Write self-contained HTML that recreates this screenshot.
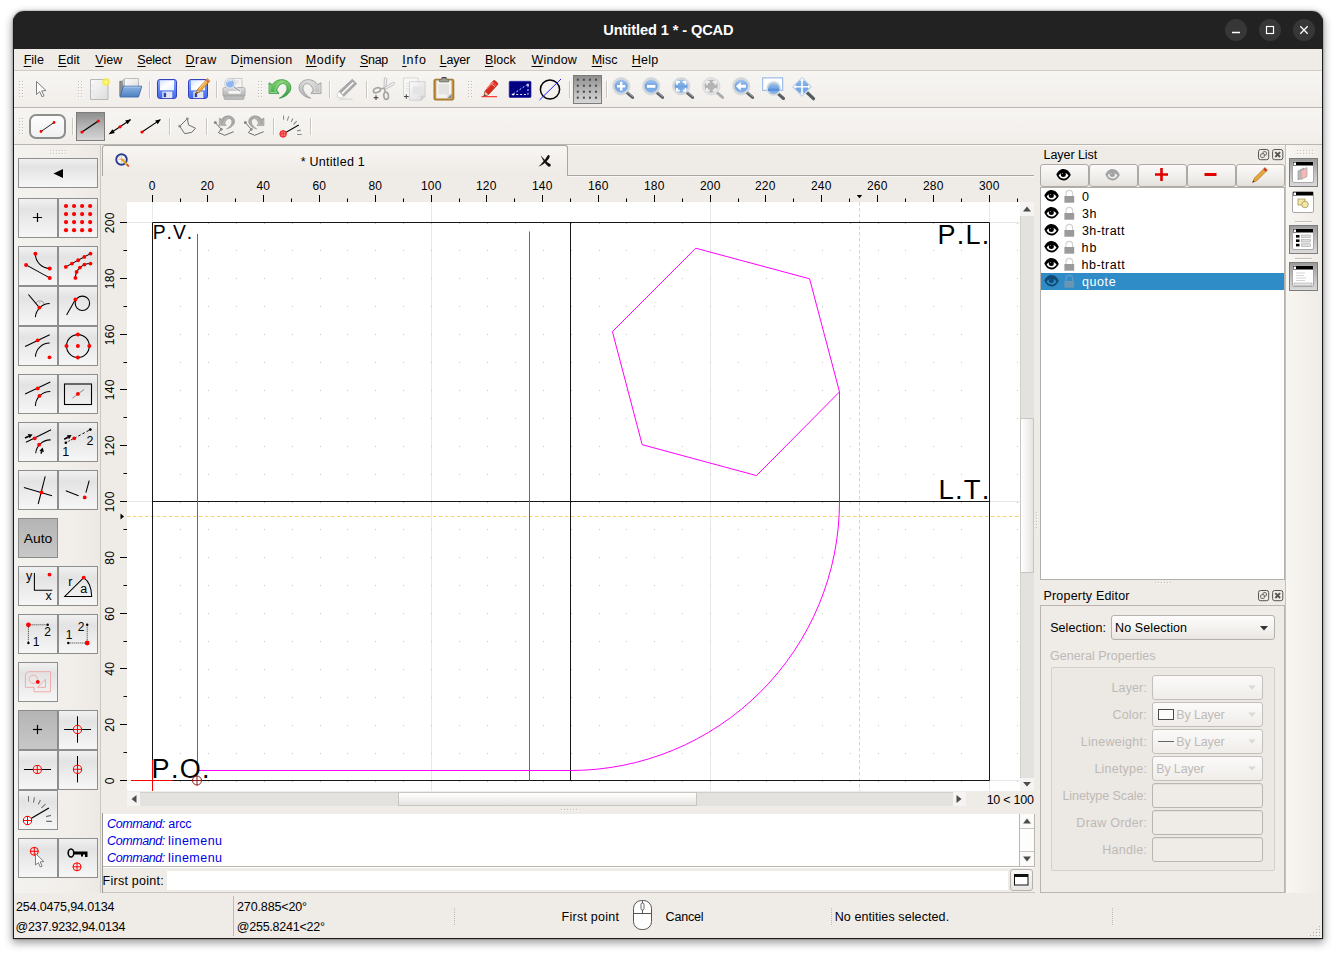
<!DOCTYPE html>
<html lang="en"><head><meta charset="utf-8"><title>Untitled 1 * - QCAD</title>
<style>

*{box-sizing:border-box;margin:0;padding:0}
html,body{width:1336px;height:955px;overflow:hidden;background:#fff}
body{font-kerning:none;position:relative;font-family:"Liberation Sans",sans-serif;font-size:12px;color:#000;line-height:1}
#win{position:absolute;left:13px;top:11px;width:1310px;height:928px;background:#efebe7;border-radius:11px 11px 0 0;
 box-shadow:0 3px 9px 1px rgba(0,0,0,.38), 0 0 2px rgba(0,0,0,.5);overflow:hidden}
#pg{position:absolute;left:-13px;top:-11px;width:1336px;height:955px}
#edge{position:absolute;left:0;top:0;right:0;bottom:0;border:1px solid #1c1c1c;border-top:none;border-radius:0;pointer-events:none;z-index:50}
.a{position:absolute}
svg text{font-kerning:none}
.t{position:absolute;white-space:nowrap;line-height:16px;height:16px}
u{text-decoration:underline;text-underline-offset:2px;text-decoration-thickness:1px}
#title{left:13px;top:11px;width:1310px;height:38px;background:#222222}
#title .tt{left:0;width:1310px;text-align:center;top:10px;color:#fff;font-weight:bold;font-size:14.6px;line-height:18px;height:18px;letter-spacing:.1px}
.wb{position:absolute;width:22px;height:22px;border-radius:11px;background:#373737;top:8px}
#menubar{left:14px;top:49px;width:1308px;height:22px;background:#efebe7;border-bottom:1px solid #cfcbc6}
#menubar .t{top:4px;font-size:12.4px}
.tb{left:14px;width:1308px;height:37px;background:linear-gradient(#f7f5f2,#f1eeea);border-bottom:1px solid #b9b5b0;box-shadow:0 1px 0 #faf9f7}
.vsep{position:absolute;width:2px;height:17px;margin-top:2px;border-left:1px solid #c9c5bf;border-right:1px solid #ffffff}
.ic{position:absolute;width:24px;height:24px}
.ic svg{display:block}
.btn{position:absolute;border:1px solid #8e8e8e;background:linear-gradient(#f1f1f1 0%,#e3e3e3 28%,#ececec 60%,#f6f6f6 100%)}
.btn.on{background:linear-gradient(#b4b4b4,#c8c8c8);border-color:#8a8a8a}
.btn svg{position:absolute;left:0;top:0}
.tbon{position:absolute;border:1px solid #7d7d7d;background:linear-gradient(#8f8f8f 0%,#b9b9b9 55%,#d6d6d6 100%)}
.fld{position:absolute;border:1px solid #b5b1ac;border-radius:3px;background:#efebe7;box-shadow:inset 0 1px 0 #e4e0db}
.combo{position:absolute;border:1px solid #b5b1ac;border-radius:3px;background:linear-gradient(#fdfcfc,#f4f2ef 55%,#e9e6e2)}
.dis{color:#bdbab6}
.lbl{position:absolute;white-space:nowrap;line-height:16px;height:16px;text-align:right}

</style></head>
<body>
<div id="win"><div id="pg">

<div id="title" class="a">
<div class="wb" style="left:1212px"><svg width="22" height="22"><path d="M7 13.500h8" stroke="#fff" stroke-width="1.300" fill="none"/></svg></div>
<div class="wb" style="left:1246px"><svg width="22" height="22"><rect x="7.500" y="7.500" width="7" height="7" stroke="#fff" stroke-width="1.200" fill="none"/></svg></div>
<div class="wb" style="left:1280px"><svg width="22" height="22"><path d="M7.300 7.300l7.400 7.400M14.700 7.300l-7.400 7.400" stroke="#fff" stroke-width="1.300" fill="none"/></svg></div>
</div>
<div id="menubar" class="a"></div><div class="t" style="left:23.67px;top:52.00px;font-size:12.5px;letter-spacing:0.013px;"><u>F</u>ile</div><div class="t" style="left:58.02px;top:52.00px;font-size:12.5px;letter-spacing:0.076px;"><u>E</u>dit</div><div class="t" style="left:95.35px;top:52.00px;font-size:12.5px;letter-spacing:-0.090px;"><u>V</u>iew</div><div class="t" style="left:137.33px;top:52.00px;font-size:12.5px;letter-spacing:-0.196px;"><u>S</u>elect</div><div class="t" style="left:185.57px;top:52.00px;font-size:12.5px;letter-spacing:0.509px;"><u>D</u>raw</div><div class="t" style="left:230.57px;top:52.00px;font-size:12.5px;letter-spacing:0.323px;">D<u>i</u>mension</div><div class="t" style="left:305.67px;top:52.00px;font-size:12.5px;letter-spacing:0.627px;"><u>M</u>odify</div><div class="t" style="left:359.93px;top:52.00px;font-size:12.5px;letter-spacing:-0.267px;"><u>S</u>nap</div><div class="t" style="left:402.15px;top:52.00px;font-size:12.5px;letter-spacing:0.976px;"><u>I</u>nfo</div><div class="t" style="left:439.67px;top:52.00px;font-size:12.5px;letter-spacing:-0.184px;"><u>L</u>ayer</div><div class="t" style="left:484.97px;top:52.00px;font-size:12.5px;letter-spacing:0.060px;"><u>B</u>lock</div><div class="t" style="left:531.55px;top:52.00px;font-size:12.5px;letter-spacing:0.173px;"><u>W</u>indow</div><div class="t" style="left:591.67px;top:52.00px;font-size:12.5px;letter-spacing:0.022px;"><u>M</u>isc</div><div class="t" style="left:631.87px;top:52.00px;font-size:12.5px;letter-spacing:0.181px;"><u>H</u>elp</div><div class="t" style="left:603.32px;top:22.00px;font-size:14.6px;letter-spacing:-0.107px;color:#fff;font-weight:bold;line-height:18px;height:18px;margin-top:-1px;">Untitled 1 * - QCAD</div>
<svg width="0" height="0" style="position:absolute"><defs>
<linearGradient id="gBlue" x1="0" y1="0" x2="0" y2="1"><stop offset="0" stop-color="#bcd6f5"/><stop offset="1" stop-color="#5d97dc"/></linearGradient>
<linearGradient id="gLens" x1="0" y1="0" x2="0" y2="1"><stop offset="0" stop-color="#a9c9f0"/><stop offset=".5" stop-color="#6fa3e3"/><stop offset="1" stop-color="#8db8ec"/></linearGradient>
<linearGradient id="gGray" x1="0" y1="0" x2="0" y2="1"><stop offset="0" stop-color="#dedede"/><stop offset="1" stop-color="#b2b2b2"/></linearGradient>
<linearGradient id="gPaper" x1="0" y1="0" x2="1" y2="1"><stop offset="0" stop-color="#fbfbfb"/><stop offset="1" stop-color="#dcdcdc"/></linearGradient>
<linearGradient id="gFloppy" x1="0" y1="0" x2="0" y2="1"><stop offset="0" stop-color="#86a6ff"/><stop offset="1" stop-color="#4169ee"/></linearGradient>
<linearGradient id="gLabel" x1="0" y1="0" x2="1" y2="1"><stop offset="0" stop-color="#d6e2ff"/><stop offset=".5" stop-color="#ffffff"/><stop offset="1" stop-color="#e4ecff"/></linearGradient>
<linearGradient id="gFolder" x1="0" y1="0" x2="0" y2="1"><stop offset="0" stop-color="#8db5e6"/><stop offset="1" stop-color="#4d7fc0"/></linearGradient>
<radialGradient id="gGlow"><stop offset="0" stop-color="#ffffd0"/><stop offset=".45" stop-color="#f6ee3c"/><stop offset="1" stop-color="#f6ee3c" stop-opacity="0"/></radialGradient>
<linearGradient id="gGreen" x1="0" y1="0" x2="0" y2="1"><stop offset="0" stop-color="#86d672"/><stop offset="1" stop-color="#2f9e40"/></linearGradient>
</defs></svg><div class="a tb" style="top:71px"></div><div class="a tb" style="top:108px"></div><svg class="a" style="left:19px;top:81px" width="7" height="20"><path d="M1 1.50h1M1 4.50h1M1 7.50h1M1 10.50h1M1 13.50h1M1 16.50h1M4 1.50h1M4 4.50h1M4 7.50h1M4 10.50h1M4 13.50h1M4 16.50h1" stroke="#fdfcfb" stroke-width="1"/><path d="M0 0.50h1M0 3.50h1M0 6.50h1M0 9.50h1M0 12.50h1M0 15.50h1M3 0.50h1M3 3.50h1M3 6.50h1M3 9.50h1M3 12.50h1M3 15.50h1" stroke="#c3bfb9" stroke-width="1"/></svg><div class="ic" style="left:29px;top:78px;width:24px;height:24px"><svg width="24" height="24" viewBox="0 0 24 24"><path d="M7.5 3.5v13l3.2-2.8 2.3 5 2-.9-2.3-4.9 4.3-.4z" fill="#fff" stroke="#7d7d7d" stroke-width="1" stroke-linejoin="round"/></svg></div><svg class="a" style="left:78px;top:81px" width="7" height="20"><path d="M1 1.50h1M1 4.50h1M1 7.50h1M1 10.50h1M1 13.50h1M1 16.50h1M4 1.50h1M4 4.50h1M4 7.50h1M4 10.50h1M4 13.50h1M4 16.50h1" stroke="#fdfcfb" stroke-width="1"/><path d="M0 0.50h1M0 3.50h1M0 6.50h1M0 9.50h1M0 12.50h1M0 15.50h1M3 0.50h1M3 3.50h1M3 6.50h1M3 9.50h1M3 12.50h1M3 15.50h1" stroke="#c3bfb9" stroke-width="1"/></svg><div class="ic" style="left:88px;top:77px;width:24px;height:24px"><svg width="24" height="24" viewBox="0 0 24 24"><path d="M2.5 2.5h17.5v20h-17.5z" fill="url(#gPaper)" stroke="#b8b8b8" stroke-width="1"/><path d="M4.5 8.5h.8M4.5 14.5h.8" stroke="#c8c8c8"/><circle cx="18" cy="5" r="5" fill="url(#gGlow)"/></svg></div><div class="ic" style="left:118px;top:77px;width:24px;height:24px"><svg width="24" height="24" viewBox="0 0 24 24"><path d="M1.800 4.300h5.500l1 1.500h12.200v13.500h-18.700z" fill="#8c8f94" stroke="#70737a" stroke-width=".8" stroke-linejoin="round"/><path d="M4.500 3l12.500-1.800 1.800 12.500h-13z" fill="#d6d6d6" stroke="#a4a4a4" stroke-width=".7"/><path d="M6.500 1.500h14v13h-14z" fill="url(#gPaper)" stroke="#aeaeae" stroke-width=".7"/><path d="M5.300 9.200h18.500l-3.300 10.800h-18.300z" fill="url(#gFolder)" stroke="#3f6ba8" stroke-width=".9" stroke-linejoin="round"/><path d="M6 10.100h16.700" stroke="#a9c8ee" stroke-width=".9"/></svg></div><div class="ic" style="left:155px;top:77px;width:24px;height:24px"><svg width="24" height="24" viewBox="0 0 24 24"><rect x="2.500" y="2.500" width="19" height="19" rx="2.400" fill="url(#gFloppy)" stroke="#3344bb" stroke-width="1"/><rect x="5" y="3.300" width="14" height="10" fill="url(#gLabel)"/><rect x="7.300" y="14.600" width="10" height="6.500" fill="#e4e6ee"/><rect x="8.700" y="15.800" width="2.400" height="4.300" fill="#2b3fb5"/></svg></div><div class="ic" style="left:186px;top:77px;width:24px;height:24px"><svg width="24" height="24" viewBox="0 0 24 24"><rect x="2.500" y="2.500" width="19" height="19" rx="2.400" fill="url(#gFloppy)" stroke="#3344bb" stroke-width="1"/><rect x="5" y="3.300" width="14" height="10" fill="url(#gLabel)"/><rect x="7.300" y="14.600" width="10" height="6.500" fill="#e4e6ee"/><rect x="8.700" y="15.800" width="2.400" height="4.300" fill="#2b3fb5"/><path d="M21.500 1.500l2.300 2.600-9.800 10.700-3.600 1.600 1-3.800z" fill="#f3a93a" stroke="#b9731a" stroke-width=".7" stroke-linejoin="round"/><path d="M20.200 2.900l2.400 2.500" stroke="#e05a4a" stroke-width="1.700"/><path d="M13.500 11.500l7.300-8" stroke="#ffd690" stroke-width="1"/><path d="M10.400 16.400l1-3.800 2.600 2.200z" fill="#ecd6b0" stroke="#7a5a2a" stroke-width=".5"/><path d="M10.400 16.400l.5-1.700 1.100 1z" fill="#333"/></svg></div><div class="ic" style="left:222px;top:77px;width:24px;height:24px"><svg width="24" height="24" viewBox="0 0 24 24"><path d="M9 1.500h11v9h-11z" fill="#f4f4f4" stroke="#c2c2c2" stroke-width=".8"/><path d="M11 4h6M11 6h6" stroke="#d6d6d6" stroke-width=".8"/><path d="M2.500 10.500h19c1 0 1.500 .6 1.500 1.500v7h-22v-7c0-.9 .5-1.500 1.500-1.500z" fill="url(#gGray)" stroke="#a6a6a6" stroke-width=".8"/><path d="M2 19h20v2.500c0 .6-.4 1-1 1h-18c-.6 0-1-.4-1-1z" fill="#bcbcbc" stroke="#a0a0a0" stroke-width=".6"/><rect x="6" y="13.500" width="13" height="3.600" rx="1" fill="#f6f6f6" stroke="#b8b8b8" stroke-width=".6"/><path d="M11.500 9.800l6 3.800" stroke="#f0f0f0" stroke-width="2.800" stroke-linecap="round"/><path d="M11.500 9.800l6 3.800" stroke="#a8adb3" stroke-width="1.400" stroke-linecap="round"/><circle cx="8" cy="6.600" r="4.700" fill="#8fb6ea" stroke="#e4e9ef" stroke-width="1.500"/><circle cx="8" cy="6.600" r="5.500" fill="none" stroke="#b5bcc4" stroke-width=".5"/><path d="M5 5.500a3.500 3.500 0 0 1 5-1.500" stroke="#d6e6fa" stroke-width="1.200" fill="none"/></svg></div><div class="vsep" style="left:149px;top:79px"></div><div class="vsep" style="left:216px;top:79px"></div><svg class="a" style="left:258px;top:81px" width="7" height="20"><path d="M1 1.50h1M1 4.50h1M1 7.50h1M1 10.50h1M1 13.50h1M1 16.50h1M4 1.50h1M4 4.50h1M4 7.50h1M4 10.50h1M4 13.50h1M4 16.50h1" stroke="#fdfcfb" stroke-width="1"/><path d="M0 0.50h1M0 3.50h1M0 6.50h1M0 9.50h1M0 12.50h1M0 15.50h1M3 0.50h1M3 3.50h1M3 6.50h1M3 9.50h1M3 12.50h1M3 15.50h1" stroke="#c3bfb9" stroke-width="1"/></svg><div class="ic" style="left:268px;top:77px;width:24px;height:24px"><svg width="24" height="24" viewBox="0 0 24 24"><path d="M1 5.800L1 16.500L11 16.600L8.700 13.100C10 9 13 6.200 15.500 6.600C18.500 7.200 19.600 10.500 18.600 13.500C17.600 16.500 14.500 19.500 11.300 21.200C17 20.600 22.500 16 22.900 11.200C23.200 6 18.500 2.600 13.600 2.600C9.500 2.600 6.500 4.800 4.200 7.500Z" fill="url(#gGreen)" stroke="#2d8f3c" stroke-width=".7" stroke-linejoin="round"/><path d="M2 8.300V15.600H8.800L6.900 13.300C8.500 8.500 11.500 5 15 4.600" fill="none" stroke="#b6ecaa" stroke-width="1" opacity=".7"/></svg></div><div class="ic" style="left:298px;top:77px;width:24px;height:24px"><svg width="24" height="24" viewBox="0 0 24 24"><g transform="translate(24,0) scale(-1,1)"><path d="M1 5.800L1 16.500L11 16.600L8.700 13.100C10 9 13 6.200 15.500 6.600C18.500 7.200 19.600 10.500 18.600 13.500C17.600 16.500 14.500 19.500 11.300 21.200C17 20.600 22.500 16 22.900 11.200C23.200 6 18.500 2.600 13.600 2.600C9.500 2.600 6.500 4.800 4.200 7.500Z" fill="url(#gGray)" stroke="#8f8f8f" stroke-width=".7" stroke-linejoin="round"/><path d="M2 8.300V15.600H8.800L6.900 13.300C8.500 8.500 11.500 5 15 4.600" fill="none" stroke="#e6e6e6" stroke-width="1" opacity=".7"/></g></svg></div><div class="ic" style="left:335px;top:77px;width:24px;height:24px"><svg width="24" height="24" viewBox="0 0 24 24"><path d="M4.500 22.300h13" stroke="#dcdcdc" stroke-width="1.400"/><path d="M17.300 2.200l4.500 4.500-13.100 12.800-4.850-4.900z" fill="#a9a9a9" stroke="#9a9a9a" stroke-width=".6" stroke-linejoin="round"/><path d="M18.300 5.600L7 16.700" stroke="#fff" stroke-width="1.700"/><path d="M20.300 4.600L9 15.700" stroke="#c9c9c9" stroke-width=".9"/><path d="M3.850 14.600l4.850 4.900-2.600 1.500-3.400-.6-.3-3.400z" fill="#fff" stroke="#c4c4c4" stroke-width=".7" stroke-linejoin="round"/></svg></div><div class="ic" style="left:372px;top:77px;width:24px;height:24px"><svg width="24" height="24" viewBox="0 0 24 24"><path d="M13.200 .6c1.300 0 1.600 1 1.500 2.500l-1 8.500-1.700-.6 .3-8c0-1.400 .2-2.400 .9-2.400z" fill="#f4f4f4" stroke="#b3b3b3" stroke-width=".8" stroke-linejoin="round"/><path d="M22.300 5.600c.5 .9 .2 1.600-.8 2.200l-8.300 4.700-1-1.600 8-5c.9-.6 1.700-.9 2.100-.3z" fill="#f4f4f4" stroke="#b3b3b3" stroke-width=".8" stroke-linejoin="round"/><ellipse cx="5" cy="13.200" rx="3.700" ry="2.300" transform="rotate(-22 5 13.200)" fill="none" stroke="#a6a6a6" stroke-width="1.700"/><ellipse cx="14.100" cy="18.800" rx="2.300" ry="3.600" transform="rotate(-8 14.100 18.800)" fill="none" stroke="#a6a6a6" stroke-width="1.700"/><path d="M8.300 11.800l4.200-.6M13 15.300l-.5-4" stroke="#a6a6a6" stroke-width="1.500"/><path d="M1.700 20.600h4.600M4 18.300v4.600" stroke="#4a4a4a" stroke-width="1.100"/></svg></div><div class="ic" style="left:402px;top:77px;width:24px;height:24px"><svg width="24" height="24" viewBox="0 0 24 24"><path d="M1.500 1h14.600v18.500h-14.600z" fill="#f7f7f7" stroke="#d4d4d4" stroke-width=".9"/><path d="M3.500 6.500h4M3.500 9h4M3.500 11.500h4M3.500 14h4" stroke="#e0e0e0" stroke-width=".8"/><path d="M7.500 4.700h15.600v14.500l-4 4h-11.600z" fill="url(#gPaper)" stroke="#cfcfcf" stroke-width=".9" stroke-linejoin="round"/><path d="M10.600 9.400h10.500v7.800h-10.500z" fill="#e4e4e4"/><path d="M23.100 19.200l-4 4v-4z" fill="#d8d8d8" stroke="#c4c4c4" stroke-width=".6"/><path d="M2 19.500h4.600M4.300 17.200v4.600" stroke="#4a4a4a" stroke-width="1.100"/></svg></div><div class="ic" style="left:432px;top:77px;width:24px;height:24px"><svg width="24" height="24" viewBox="0 0 24 24"><rect x="2" y="2.200" width="19.800" height="20.800" rx="1.500" fill="#c18a30" stroke="#9a6a1e" stroke-width=".9"/><path d="M4.200 3.700h15.400v17.600h-15.400z" fill="#f3f3f1" stroke="#d0cdc4" stroke-width=".6"/><path d="M6.500 7h10.500v10.500h-10.500z" fill="#e3e3e1"/><path d="M19.600 16.800l-4.500 4.500h4.500z" fill="#8a8a8a"/><path d="M19.600 16.800l-4.500 4.500 .5-4z" fill="#d9d9d9"/><path d="M7.600 4.900h9v-2.400h-1.800l-.6-2.300h-4.200l-.6 2.300h-1.800z" fill="#9a9b90" stroke="#6f7068" stroke-width=".8" stroke-linejoin="round"/><path d="M10 .7h4" stroke="#333" stroke-width="1"/></svg></div><div class="vsep" style="left:329px;top:79px"></div><div class="vsep" style="left:366px;top:79px"></div><svg class="a" style="left:468px;top:81px" width="7" height="20"><path d="M1 1.50h1M1 4.50h1M1 7.50h1M1 10.50h1M1 13.50h1M1 16.50h1M4 1.50h1M4 4.50h1M4 7.50h1M4 10.50h1M4 13.50h1M4 16.50h1" stroke="#fdfcfb" stroke-width="1"/><path d="M0 0.50h1M0 3.50h1M0 6.50h1M0 9.50h1M0 12.50h1M0 15.50h1M3 0.50h1M3 3.50h1M3 6.50h1M3 9.50h1M3 12.50h1M3 15.50h1" stroke="#c3bfb9" stroke-width="1"/></svg><div class="ic" style="left:478px;top:77px;width:24px;height:24px"><svg width="24" height="24" viewBox="0 0 24 24"><path d="M3.500 19.600h15.500" stroke="#ff3b3b" stroke-width="1.100"/><path d="M14.800 4.300c.8-.9 1.700-.9 2.600-.2l1.700 1.500c.8.700.9 1.600.2 2.400l-8.800 9.500-4.500 1.700 1-4.800z" fill="#dd2a1c" stroke="#a3170e" stroke-width=".7" stroke-linejoin="round"/><path d="M13.300 6.600l3.800 3.300" stroke="#f6b2aa" stroke-width="1"/><path d="M14.300 5l4 3.500" stroke="#f08a80" stroke-width=".8"/><path d="M9 11.500l6-6.500" stroke="#ff7a6a" stroke-width="1.200"/><path d="M6 19.200l1-4.800 3.500 3.100z" fill="#efd2ac" stroke="#8a5a3a" stroke-width=".5"/><path d="M6 19.200l.45-2 1.400 1.300z" fill="#333"/></svg></div><div class="ic" style="left:508px;top:77px;width:24px;height:24px"><svg width="24" height="24" viewBox="0 0 24 24"><rect x="1.200" y="4.300" width="21.800" height="16.200" rx="1" fill="#000082" stroke="#2a2aa8" stroke-width=".7"/><path d="M4.500 17.500h15.500v-10.500z" fill="none" stroke="#e4e4ff" stroke-width="1" stroke-dasharray="2 1.800"/><path d="M3.300 17.500l2.200-1.300v2.600zM20 6.300l-1.300 2.200h2.600z" fill="#fff"/></svg></div><div class="ic" style="left:538px;top:77px;width:24px;height:24px"><svg width="24" height="24" viewBox="0 0 24 24"><circle cx="12" cy="12.500" r="9.600" fill="none" stroke="#000" stroke-width="1.500"/><path d="M1.500 23L23 2" stroke="#2020ff" stroke-width="1"/></svg></div><div class="vsep" style="left:569px;top:79px"></div><div class="tbon" style="left:573px;top:75px;width:29px;height:29px"><svg style="position:absolute;left:1px;top:1px" width="27" height="27" viewBox="0 0 27 27"><rect x="1.80" y="1.70" width="2" height="2" fill="#484848"/><rect x="1.80" y="7.70" width="2" height="2" fill="#484848"/><rect x="1.80" y="13.70" width="2" height="2" fill="#484848"/><rect x="1.80" y="19.70" width="2" height="2" fill="#484848"/><rect x="7.88" y="1.70" width="2" height="2" fill="#484848"/><rect x="7.88" y="7.70" width="2" height="2" fill="#484848"/><rect x="7.88" y="13.70" width="2" height="2" fill="#484848"/><rect x="7.88" y="19.70" width="2" height="2" fill="#484848"/><rect x="13.96" y="1.70" width="2" height="2" fill="#484848"/><rect x="13.96" y="7.70" width="2" height="2" fill="#484848"/><rect x="13.96" y="13.70" width="2" height="2" fill="#484848"/><rect x="13.96" y="19.70" width="2" height="2" fill="#484848"/><rect x="20.04" y="1.70" width="2" height="2" fill="#484848"/><rect x="20.04" y="7.70" width="2" height="2" fill="#484848"/><rect x="20.04" y="13.70" width="2" height="2" fill="#484848"/><rect x="20.04" y="19.70" width="2" height="2" fill="#484848"/></svg></div><div class="vsep" style="left:606px;top:79px"></div><div class="ic" style="left:611px;top:77px;width:24px;height:24px"><svg width="24" height="24" viewBox="0 0 24 24"><path d="M16 15.600l5.600 4.800" stroke="#5a5f63" stroke-width="3" stroke-linecap="round"/><path d="M16.600 15.300l5.300 4.500" stroke="#a4aaae" stroke-width=".9" stroke-linecap="round"/><circle cx="10.200" cy="9.200" r="7.500" fill="url(#gLens)" stroke="#d3d8dd" stroke-width="1.900"/><circle cx="10.200" cy="9.200" r="8.700" fill="none" stroke="#c3c8cd" stroke-width=".5"/><g transform="translate(.5,-.3)"><path d="M5.500 9.500h8.400M9.700 5.300v8.400" stroke="#fff" stroke-width="2.400"/></g></svg></div><div class="ic" style="left:641px;top:77px;width:24px;height:24px"><svg width="24" height="24" viewBox="0 0 24 24"><path d="M16 15.600l5.600 4.800" stroke="#5a5f63" stroke-width="3" stroke-linecap="round"/><path d="M16.600 15.300l5.300 4.500" stroke="#a4aaae" stroke-width=".9" stroke-linecap="round"/><circle cx="10.200" cy="9.200" r="7.500" fill="url(#gLens)" stroke="#d3d8dd" stroke-width="1.900"/><circle cx="10.200" cy="9.200" r="8.700" fill="none" stroke="#c3c8cd" stroke-width=".5"/><g transform="translate(.5,-.3)"><path d="M5.500 9.700h8.400" stroke="#fff" stroke-width="2.600"/></g></svg></div><div class="ic" style="left:671px;top:77px;width:24px;height:24px"><svg width="24" height="24" viewBox="0 0 24 24"><path d="M16 15.600l5.600 4.800" stroke="#5a5f63" stroke-width="3" stroke-linecap="round"/><path d="M16.600 15.300l5.300 4.500" stroke="#a4aaae" stroke-width=".9" stroke-linecap="round"/><circle cx="10.200" cy="9.200" r="7.500" fill="url(#gLens)" stroke="#d3d8dd" stroke-width="1.900"/><circle cx="10.200" cy="9.200" r="8.700" fill="none" stroke="#c3c8cd" stroke-width=".5"/><g transform="translate(.5,-.3)"><path d="M5.500 8v-2.700h2.800M11.200 5.300h2.800v2.700M14 11.200v2.700h-2.800M8.300 13.900h-2.800v-2.700" stroke="#fff" stroke-width="1.800" fill="none"/></g></svg></div><div class="ic" style="left:701px;top:77px;width:24px;height:24px"><svg width="24" height="24" viewBox="0 0 24 24"><path d="M16 15.600l5.600 4.800" stroke="#b0b0b0" stroke-width="3" stroke-linecap="round"/><path d="M16.600 15.300l5.300 4.500" stroke="#a4aaae" stroke-width=".9" stroke-linecap="round"/><circle cx="10.200" cy="9.200" r="7.500" fill="#b4b4b4" stroke="#e4e4e4" stroke-width="1.900"/><circle cx="10.200" cy="9.200" r="8.700" fill="none" stroke="#c3c8cd" stroke-width=".5"/><g transform="translate(.5,-.3)"><path d="M5.500 8v-2.700h2.800M11.200 5.300h2.800v2.700M14 11.200v2.700h-2.800M8.300 13.900h-2.800v-2.700" stroke="#efefef" stroke-width="2" fill="none"/></g></svg></div><div class="ic" style="left:731px;top:77px;width:24px;height:24px"><svg width="24" height="24" viewBox="0 0 24 24"><path d="M16 15.600l5.600 4.800" stroke="#5a5f63" stroke-width="3" stroke-linecap="round"/><path d="M16.600 15.300l5.300 4.500" stroke="#a4aaae" stroke-width=".9" stroke-linecap="round"/><circle cx="10.200" cy="9.200" r="7.500" fill="url(#gLens)" stroke="#d3d8dd" stroke-width="1.900"/><circle cx="10.200" cy="9.200" r="8.700" fill="none" stroke="#c3c8cd" stroke-width=".5"/><g transform="translate(.5,-.3)"><path d="M4.300 9.600l5-4.200v2.700h5.200v3h-5.200v2.700z" fill="#fff"/></g></svg></div><div class="ic" style="left:761px;top:77px;width:24px;height:24px"><svg width="24" height="24" viewBox="0 0 24 24"><rect x="1.700" y=".9" width="20" height="12.400" fill="#fff" stroke="#8ab0e8" stroke-width="1"/><path d="M17.500 17.200l5 4.300" stroke="#5a5f63" stroke-width="3" stroke-linecap="round"/><circle cx="12.700" cy="11.500" r="6.400" fill="url(#gLens)" stroke="#d3d8dd" stroke-width="1.800"/><path d="M7 12.800h11.400" stroke="#5b90d8" stroke-width="2.200"/></svg></div><div class="ic" style="left:792px;top:77px;width:24px;height:24px"><svg width="24" height="24" viewBox="0 0 24 24"><path d="M15 15.500l6.500 6.200" stroke="#555a5f" stroke-width="3.200" stroke-linecap="round"/><path d="M10 0l9.800 9.800-9.800 9.800-9.800-9.800z" fill="url(#gLens)" stroke="#dfe3e8" stroke-width="1.200"/><path d="M10 2.500v14.600M2.700 9.800h14.600" stroke="#fff" stroke-width="1.600"/><path d="M10 1l2 2.800h-4zM10 18.600l2-2.800h-4zM1.200 9.800l2.800-2v4zM18.800 9.800l-2.800-2v4z" fill="#fff"/></svg></div><svg class="a" style="left:19px;top:118px" width="7" height="20"><path d="M1 1.50h1M1 4.50h1M1 7.50h1M1 10.50h1M1 13.50h1M1 16.50h1M4 1.50h1M4 4.50h1M4 7.50h1M4 10.50h1M4 13.50h1M4 16.50h1" stroke="#fdfcfb" stroke-width="1"/><path d="M0 0.50h1M0 3.50h1M0 6.50h1M0 9.50h1M0 12.50h1M0 15.50h1M3 0.50h1M3 3.50h1M3 6.50h1M3 9.50h1M3 12.50h1M3 15.50h1" stroke="#c3bfb9" stroke-width="1"/></svg><div class="a" style="left:29px;top:114px;width:37px;height:25px;border:2px solid #8e8e8e;border-radius:7px;background:linear-gradient(#fdfdfd,#f0f0f0)"></div><div class="ic" style="left:29px;top:114px;width:37px;height:24px"><svg width="37" height="24" viewBox="0 0 37 24"><path d="M12 17.500L25 8.500" stroke="#222" stroke-width="1"/><circle cx="12" cy="17.5" r="1.4" fill="#ff0000"/><circle cx="25" cy="8.5" r="1.4" fill="#ff0000"/></svg></div><div class="vsep" style="left:72px;top:116px"></div><div class="tbon" style="left:76px;top:112px;width:29px;height:29px"></div><div class="ic" style="left:76px;top:112px;width:29px;height:29px"><svg width="29" height="29" viewBox="0 0 29 29"><path d="M6 20L22.300 9" stroke="#000" stroke-width="1.2"/><circle cx="6" cy="20" r="1.6" fill="#ff0000"/><circle cx="22.3" cy="9" r="1.6" fill="#ff0000"/></svg></div><div class="ic" style="left:108px;top:114px;width:24px;height:24px"><svg width="24" height="24" viewBox="0 0 24 24"><path d="M1.500 19.800L22.500 5.700" stroke="#000" stroke-width="1.1"/><path d="M1 20.200l5.800-1.300-2.400-3.600zM23 5.300l-5.800 1.300 2.400 3.600z" fill="#000"/><circle cx="12" cy="12.8" r="1.6" fill="#ff0000"/></svg></div><div class="ic" style="left:138px;top:114px;width:24px;height:24px"><svg width="24" height="24" viewBox="0 0 24 24"><path d="M4 18L22 5.900" stroke="#000" stroke-width="1.100"/><path d="M23 5.300l-5.800 1.300 2.400 3.600z" fill="#000"/><circle cx="4" cy="18" r="1.6" fill="#ff0000"/></svg></div><div class="vsep" style="left:169px;top:116px"></div><div class="ic" style="left:175px;top:114px;width:24px;height:24px"><svg width="24" height="24" viewBox="0 0 24 24"><path d="M12.400 4.700L13.500 10.900L20.500 14.200L16.800 18.300L9.800 19.700L4.700 12.300Z" fill="none" stroke="#6e6e6e" stroke-width="1" stroke-linejoin="round"/><circle cx="12.300" cy="4.800" r="1.400" fill="#8a8a8a"/><circle cx="4.800" cy="12.200" r="1.400" fill="#8a8a8a"/></svg></div><div class="vsep" style="left:206px;top:116px"></div><div class="ic" style="left:212px;top:114px;width:24px;height:24px"><svg width="24" height="24" viewBox="0 0 24 24"><path d="M3.300 8.600L9.300 15.300L6.400 18.600L12.700 21.300L21.700 17.700" fill="none" stroke="#6e6e6e" stroke-width="1" stroke-linejoin="round"/><circle cx="3.300" cy="8.600" r="1.500" fill="#8a8a8a"/><circle cx="9.300" cy="15.300" r="1.400" fill="#8a8a8a"/><g transform="translate(6.600,0) scale(.7)"><path d="M1 5.800L1 16.500L11 16.600L8.700 13.100C10 9 13 6.200 15.500 6.600C18.500 7.200 19.600 10.500 18.600 13.500C17.600 16.500 14.500 19.500 11.300 21.200C17 20.600 22.500 16 22.900 11.200C23.200 6 18.500 2.600 13.600 2.600C9.500 2.600 6.500 4.800 4.200 7.500Z" fill="#a8a8a8" stroke="#8c8c8c" stroke-width=".7" stroke-linejoin="round"/><path d="M2 8.300V15.600H8.800L6.900 13.300C8.500 8.500 11.500 5 15 4.600" fill="none" stroke="#cfcfcf" stroke-width="1" opacity=".7"/></g></svg></div><div class="ic" style="left:242px;top:114px;width:24px;height:24px"><svg width="24" height="24" viewBox="0 0 24 24"><path d="M3.300 8.600L9.300 15.300L6.400 18.600L12.700 21.300L21.700 17.700" fill="none" stroke="#6e6e6e" stroke-width="1" stroke-linejoin="round"/><circle cx="3.300" cy="8.600" r="1.500" fill="#8a8a8a"/><circle cx="9.300" cy="15.300" r="1.400" fill="#8a8a8a"/><g transform="translate(22.700,0) scale(-.7,.7)"><path d="M1 5.800L1 16.500L11 16.600L8.700 13.100C10 9 13 6.200 15.500 6.600C18.500 7.200 19.600 10.500 18.600 13.500C17.600 16.500 14.500 19.500 11.300 21.200C17 20.600 22.500 16 22.900 11.200C23.200 6 18.500 2.600 13.600 2.600C9.500 2.600 6.500 4.800 4.200 7.500Z" fill="#a8a8a8" stroke="#8c8c8c" stroke-width=".7" stroke-linejoin="round"/><path d="M2 8.300V15.600H8.800L6.900 13.300C8.500 8.500 11.500 5 15 4.600" fill="none" stroke="#cfcfcf" stroke-width="1" opacity=".7"/></g></svg></div><div class="vsep" style="left:273px;top:116px"></div><div class="ic" style="left:279px;top:114px;width:24px;height:24px"><svg width="24" height="24" viewBox="0 0 24 24"><path d="M4.500 1.400L4.600 5.700M9.700 2.400L8.300 6.700M13.900 4.500L12.100 7.900M17.700 7.100L14.500 10.500M18 16.900L21.800 16.100M18 20.500H22.800" stroke="#fbfbfa" stroke-width="1" fill="none" transform="translate(-.8,.3)"/><path d="M4.500 1.400L4.600 5.700M9.700 2.400L8.300 6.700M13.900 4.500L12.100 7.900M17.700 7.100L14.500 10.500M18 16.900L21.800 16.100M18 20.500H22.800" stroke="#8a8a8a" stroke-width="1.100" fill="none"/><path d="M4.900 19.500L19.800 10.900" stroke="#111" stroke-width="1.200"/><circle cx="4.100" cy="19.900" r="3.300" fill="#ff5a5a" stroke="#ee1c1c" stroke-width=".9"/><path d="M1.300 19.900h5.600M4.100 17.100v5.600" stroke="#e81818" stroke-width=".9"/><path d="M2.600 18.400h.9v.9h-.9zM4.700 18.400h.9v.9h-.9zM2.600 20.500h.9v.9h-.9zM4.700 20.500h.9v.9h-.9z" fill="#ffd6d6"/></svg></div><div class="vsep" style="left:310px;top:116px"></div><div class="a" style="left:14px;top:145px;width:87px;height:748px;background:linear-gradient(90deg,#f4f2ef,#f1eeea 70%,#ece8e3);border-right:1px solid #c9c5bf"></div><svg class="a" style="left:50px;top:150px" width="19" height="8"><path d="M1 1.50h1M1 4.50h1M4 1.50h1M4 4.50h1M7 1.50h1M7 4.50h1M10 1.50h1M10 4.50h1M13 1.50h1M13 4.50h1M16 1.50h1M16 4.50h1" stroke="#fdfcfb" stroke-width="1"/><path d="M0 0.50h1M0 3.50h1M3 0.50h1M3 3.50h1M6 0.50h1M6 3.50h1M9 0.50h1M9 3.50h1M12 0.50h1M12 3.50h1M15 0.50h1M15 3.50h1" stroke="#c3bfb9" stroke-width="1"/></svg><div class="btn" style="left:18px;top:158px;width:80px;height:30px"><svg width="78" height="28" viewBox="1 1 78 28"><path d="M35.500 15.500l9.500-4.500v9z" fill="#000"/></svg></div><div class="btn" style="left:18px;top:198px;width:40px;height:40px"><svg width="38" height="38" viewBox="1 1 38 38"><path d="M14.9 19.5L24.1 19.5" stroke="#000" stroke-width="1.2" fill="none" /><path d="M19.5 14.9L19.5 24.1" stroke="#000" stroke-width="1.2" fill="none" /></svg></div><div class="btn" style="left:58px;top:198px;width:40px;height:40px"><svg width="38" height="38" viewBox="1 1 38 38"><circle cx="8.0" cy="8.0" r="2.1" fill="#ff0000"/><circle cx="8.0" cy="16.05" r="2.1" fill="#ff0000"/><circle cx="8.0" cy="24.1" r="2.1" fill="#ff0000"/><circle cx="8.0" cy="32.150000000000006" r="2.1" fill="#ff0000"/><circle cx="16.05" cy="8.0" r="2.1" fill="#ff0000"/><circle cx="16.05" cy="16.05" r="2.1" fill="#ff0000"/><circle cx="16.05" cy="24.1" r="2.1" fill="#ff0000"/><circle cx="16.05" cy="32.150000000000006" r="2.1" fill="#ff0000"/><circle cx="24.1" cy="8.0" r="2.1" fill="#ff0000"/><circle cx="24.1" cy="16.05" r="2.1" fill="#ff0000"/><circle cx="24.1" cy="24.1" r="2.1" fill="#ff0000"/><circle cx="24.1" cy="32.150000000000006" r="2.1" fill="#ff0000"/><circle cx="32.150000000000006" cy="8.0" r="2.1" fill="#ff0000"/><circle cx="32.150000000000006" cy="16.05" r="2.1" fill="#ff0000"/><circle cx="32.150000000000006" cy="24.1" r="2.1" fill="#ff0000"/><circle cx="32.150000000000006" cy="32.150000000000006" r="2.1" fill="#ff0000"/></svg></div><div class="btn" style="left:18px;top:246px;width:40px;height:40px"><svg width="38" height="38" viewBox="1 1 38 38"><path d="M8.1 18.9L31.7 31.9" stroke="#000" stroke-width="1.05" fill="none" /><path d="M17.400 7.800A14.300 14.600 0 0 0 31.700 22.400" stroke="#000" stroke-width="1.05" fill="none" /><circle cx="8.1" cy="18.9" r="2.0" fill="#ff0000"/><circle cx="31.7" cy="31.9" r="2.0" fill="#ff0000"/><circle cx="17.4" cy="7.8" r="2.0" fill="#ff0000"/><circle cx="31.7" cy="22.4" r="2.0" fill="#ff0000"/></svg></div><div class="btn" style="left:58px;top:246px;width:40px;height:40px"><svg width="38" height="38" viewBox="1 1 38 38"><path d="M7.8 20.9L32.5 7.6" stroke="#000" stroke-width="1.05" fill="none" /><path d="M17.400 31.900A15 14.500 0 0 1 32.500 17.600" stroke="#000" stroke-width="1.05" fill="none" /><circle cx="7.8" cy="20.9" r="1.9" fill="#ff0000"/><circle cx="13.975" cy="17.575" r="1.9" fill="#ff0000"/><circle cx="20.15" cy="14.25" r="1.9" fill="#ff0000"/><circle cx="26.325" cy="10.924999999999999" r="1.9" fill="#ff0000"/><circle cx="32.5" cy="7.6" r="1.9" fill="#ff0000"/><circle cx="17.4" cy="31.9" r="1.9" fill="#ff0000"/><circle cx="18.6" cy="26" r="1.9" fill="#ff0000"/><circle cx="21.9" cy="21.6" r="1.9" fill="#ff0000"/><circle cx="26.4" cy="18.6" r="1.9" fill="#ff0000"/><circle cx="32.5" cy="17.6" r="1.9" fill="#ff0000"/></svg></div><div class="btn" style="left:18px;top:286px;width:40px;height:40px"><svg width="38" height="38" viewBox="1 1 38 38"><path d="M17.800 17.300A4.500 4.500 0 0 1 26.300 18.400" fill="none" stroke="#777" stroke-width=".7"/><circle cx="21.800" cy="16.800" r=".6" fill="#999"/><path d="M10.4 8.5L21.4 21.6" stroke="#000" stroke-width="1.05" fill="none" /><path d="M31.700 17.600A14.500 14.500 0 0 0 17.400 31.100" stroke="#000" stroke-width="1.05" fill="none" /><circle cx="21.4" cy="21.6" r="1.9" fill="#ff0000"/></svg></div><div class="btn" style="left:58px;top:286px;width:40px;height:40px"><svg width="38" height="38" viewBox="1 1 38 38"><circle cx="24.400" cy="17.300" r="7.200" fill="none" stroke="#000" stroke-width="1.100"/><path d="M17.4 13.5L8.6 29.1" stroke="#000" stroke-width="1.05" fill="none" /><circle cx="17.4" cy="13.5" r="1.9" fill="#ff0000"/></svg></div><div class="btn" style="left:18px;top:326px;width:40px;height:40px"><svg width="38" height="38" viewBox="1 1 38 38"><path d="M7.1 20.5L31.7 8.7" stroke="#000" stroke-width="1.05" fill="none" /><path d="M31.700 17A14.300 14.300 0 0 0 17.400 30.800" stroke="#000" stroke-width="1.05" fill="none" /><circle cx="19.7" cy="14.3" r="1.9" fill="#ff0000"/><circle cx="31.5" cy="31.3" r="1.9" fill="#ff0000"/></svg></div><div class="btn" style="left:58px;top:326px;width:40px;height:40px"><svg width="38" height="38" viewBox="1 1 38 38"><circle cx="19.900" cy="20" r="11.400" fill="none" stroke="#000" stroke-width="1.100"/><circle cx="19.9" cy="20" r="2.0" fill="#ff0000"/><circle cx="8.5" cy="20" r="2.0" fill="#ff0000"/><circle cx="31.3" cy="20" r="2.0" fill="#ff0000"/><circle cx="19.9" cy="8.6" r="2.0" fill="#ff0000"/><circle cx="19.9" cy="31.4" r="2.0" fill="#ff0000"/></svg></div><div class="btn" style="left:18px;top:374px;width:40px;height:40px"><svg width="38" height="38" viewBox="1 1 38 38"><path d="M7.1 19.9L32.3 8.1" stroke="#000" stroke-width="1.05" fill="none" /><path d="M32.300 17.400A14.900 14.900 0 0 0 17.400 32" stroke="#000" stroke-width="1.05" fill="none" /><circle cx="19.7" cy="14.4" r="1.9" fill="#ff0000"/><circle cx="21.4" cy="21.9" r="1.9" fill="#ff0000"/></svg></div><div class="btn" style="left:58px;top:374px;width:40px;height:40px"><svg width="38" height="38" viewBox="1 1 38 38"><rect x="6.500" y="10" width="27" height="20.500" fill="none" stroke="#000" stroke-width="1.100"/><path d="M14.4 24.2L26.2 15.4" stroke="#666" stroke-width="0.7" fill="none" /><circle cx="19.9" cy="19.9" r="1.9" fill="#ff0000"/></svg></div><div class="btn" style="left:18px;top:422px;width:40px;height:40px"><svg width="38" height="38" viewBox="1 1 38 38"><path d="M8 20.3L33.1 7.8" stroke="#000" stroke-width="1.05" fill="none" /><path d="M32.700 17.900A14.500 14.500 0 0 0 17.700 31.300" stroke="#000" stroke-width="1.05" fill="none" /><path d="M7.0 15.9L10.8 14.2" stroke="#000" stroke-width="1.6" fill="none"/><path d="M14.6 12.5L11.7 16.3L9.8 12.1Z" fill="#000"/><path d="M23.1 31.6L23.7 29.5" stroke="#000" stroke-width="1.6" fill="none"/><path d="M24.7 25.4L25.9 30.0L21.4 28.9Z" fill="#000"/><circle cx="16.7" cy="16.3" r="1.9" fill="#ff0000"/><circle cx="21.1" cy="22.7" r="1.9" fill="#ff0000"/></svg></div><div class="btn" style="left:58px;top:422px;width:40px;height:40px"><svg width="38" height="38" viewBox="1 1 38 38"><path d="M16.2 16.3L32.3 7.6" stroke="#000" stroke-width="1" fill="none" stroke-dasharray="2.500 2.200"/><path d="M7.8 20.7L16.2 16.3" stroke="#000" stroke-width="1" fill="none" stroke-dasharray="1.500 1.500"/><circle cx="7.8" cy="20.7" r="1.3" fill="#000"/><circle cx="32.3" cy="7.6" r="1.4" fill="#000"/><path d="M6.2 17.3L9.9 15.2" stroke="#000" stroke-width="1.6" fill="none"/><path d="M13.6 13.1L11.1 17.2L8.8 13.2Z" fill="#000"/><circle cx="16.2" cy="16.3" r="1.9" fill="#ff0000"/><text x="7.8" y="34.3" font-family="Liberation Sans, sans-serif" font-size="12.5" text-anchor="middle" fill="#000">1</text><text x="31.9" y="22.8" font-family="Liberation Sans, sans-serif" font-size="12.5" text-anchor="middle" fill="#000">2</text></svg></div><div class="btn" style="left:18px;top:470px;width:40px;height:40px"><svg width="38" height="38" viewBox="1 1 38 38"><path d="M5.9 17.6L34 25.7" stroke="#000" stroke-width="1.05" fill="none" /><path d="M27.2 6.3L20.2 34" stroke="#000" stroke-width="1.05" fill="none" /><circle cx="23.5" cy="22.4" r="1.9" fill="#ff0000"/></svg></div><div class="btn" style="left:58px;top:470px;width:40px;height:40px"><svg width="38" height="38" viewBox="1 1 38 38"><path d="M7.8 20.7L20.6 25.7" stroke="#000" stroke-width="1.05" fill="none" /><path d="M31.2 10.6L27.9 22.7" stroke="#000" stroke-width="1.05" fill="none" /><circle cx="26.7" cy="27.4" r="1.9" fill="#ff0000"/></svg></div><div class="btn on" style="left:18px;top:518px;width:40px;height:40px"><svg width="38" height="38" viewBox="1 1 38 38"><text x="20" y="24.500" font-family="Liberation Sans, sans-serif" font-size="13" text-anchor="middle" fill="#000" textLength="28.500" lengthAdjust="spacingAndGlyphs">Auto</text></svg></div><div class="btn" style="left:18px;top:566px;width:40px;height:40px"><svg width="38" height="38" viewBox="1 1 38 38"><path d="M16.400 7V24.200H34.300" stroke="#000" stroke-width="1.05" fill="none" /><text x="11" y="14" font-family="Liberation Sans, sans-serif" font-size="12.5" text-anchor="middle" fill="#000">y</text><text x="30.5" y="33.5" font-family="Liberation Sans, sans-serif" font-size="12.5" text-anchor="middle" fill="#000">x</text><circle cx="31.5" cy="8.6" r="1.9" fill="#ff0000"/></svg></div><div class="btn" style="left:58px;top:566px;width:40px;height:40px"><svg width="38" height="38" viewBox="1 1 38 38"><path d="M6.800 30.400L25.700 11.600C30.500 15 33.500 22 33.700 30.400Z" stroke="#000" stroke-width="1.05" fill="none" /><text x="12.4" y="20" font-family="Liberation Sans, sans-serif" font-size="12.5" text-anchor="middle" fill="#000">r</text><text x="25.7" y="26.5" font-family="Liberation Sans, sans-serif" font-size="12.5" text-anchor="middle" fill="#000">a</text><circle cx="25.7" cy="11.6" r="1.9" fill="#ff0000"/></svg></div><div class="btn" style="left:18px;top:614px;width:40px;height:40px"><svg width="38" height="38" viewBox="1 1 38 38"><path d="M10.4 10.8L29.7 10.8" stroke="#333" stroke-width="1" fill="none" stroke-dasharray="1 1"/><path d="M10.4 10.8L10.4 29" stroke="#333" stroke-width="1" fill="none" stroke-dasharray="1 1"/><circle cx="10.4" cy="10.8" r="2.4" fill="#ff0000"/><circle cx="29.7" cy="10.8" r="1.2" fill="#000"/><circle cx="10.4" cy="29" r="1.2" fill="#000"/><text x="29.7" y="22.3" font-family="Liberation Sans, sans-serif" font-size="12" text-anchor="middle" fill="#000">2</text><text x="18" y="32" font-family="Liberation Sans, sans-serif" font-size="12" text-anchor="middle" fill="#000">1</text></svg></div><div class="btn" style="left:58px;top:614px;width:40px;height:40px"><svg width="38" height="38" viewBox="1 1 38 38"><path d="M10.3 29L29.2 29" stroke="#333" stroke-width="1" fill="none" stroke-dasharray="1 1"/><path d="M29.2 10.8L29.2 29" stroke="#333" stroke-width="1" fill="none" stroke-dasharray="1 1"/><circle cx="29.2" cy="29" r="2.4" fill="#ff0000"/><circle cx="29.2" cy="10.8" r="1.2" fill="#000"/><circle cx="10.3" cy="29" r="1.2" fill="#000"/><text x="23.2" y="17" font-family="Liberation Sans, sans-serif" font-size="12" text-anchor="middle" fill="#000">2</text><text x="11.1" y="25" font-family="Liberation Sans, sans-serif" font-size="12" text-anchor="middle" fill="#000">1</text></svg></div><div class="btn" style="left:18px;top:662px;width:40px;height:40px"><svg width="38" height="38" viewBox="1 1 38 38"><path d="M11.900 9.700H32.500V29.800H16.100V25.300H7.400V13.900Q7.400 9.700 11.900 9.700Z" stroke="#f3a3a3" stroke-width="0.9" fill="none" /><circle cx="15.300" cy="17.300" r="4.200" fill="none" stroke="#f3a3a3" stroke-width=".9"/><path d="M19.500 25.300L27.500 17.300V25.300Z" stroke="#f3a3a3" stroke-width="0.9" fill="none" /><circle cx="19.8" cy="19.9" r="1.9" fill="#ff0000"/></svg></div><div class="btn on" style="left:18px;top:710px;width:40px;height:40px"><svg width="38" height="38" viewBox="1 1 38 38"><path d="M14.9 19.5L24.1 19.5" stroke="#000" stroke-width="1.2" fill="none" /><path d="M19.5 14.9L19.5 24.1" stroke="#000" stroke-width="1.2" fill="none" /></svg></div><div class="btn" style="left:58px;top:710px;width:40px;height:40px"><svg width="38" height="38" viewBox="1 1 38 38"><path d="M6.1 19.5L33 19.5" stroke="#000" stroke-width="1.05" fill="none" /><path d="M19.5 6.3L19.5 32.7" stroke="#000" stroke-width="1.05" fill="none" /><circle cx="19.5" cy="19.5" r="4.2" fill="none" stroke="#ff0000" stroke-width="1"/><path d="M15.0 19.5h9.0M19.5 15.0v9.0" stroke="#ff0000" stroke-width="1"/></svg></div><div class="btn" style="left:18px;top:750px;width:40px;height:40px"><svg width="38" height="38" viewBox="1 1 38 38"><path d="M5.9 19.5L33 19.5" stroke="#000" stroke-width="1.05" fill="none" /><circle cx="19.3" cy="19.5" r="4.1" fill="none" stroke="#ff0000" stroke-width="1"/><path d="M14.9 19.5h8.799999999999999M19.3 15.1v8.799999999999999" stroke="#ff0000" stroke-width="1"/></svg></div><div class="btn" style="left:58px;top:750px;width:40px;height:40px"><svg width="38" height="38" viewBox="1 1 38 38"><path d="M19.5 6L19.5 32.4" stroke="#000" stroke-width="1.05" fill="none" /><circle cx="19.5" cy="19.3" r="4.1" fill="none" stroke="#ff0000" stroke-width="1"/><path d="M15.1 19.3h8.799999999999999M19.5 14.9v8.799999999999999" stroke="#ff0000" stroke-width="1"/></svg></div><div class="btn" style="left:18px;top:790px;width:40px;height:40px"><svg width="38" height="38" viewBox="1 1 38 38"><path d="M10.400 6.100V11.800M16.400 7.400L15.300 12.700M22.400 10L20.100 14.600M27.500 14.100L23.300 17.800M33 25.400L28 26.600M28.200 31.400H33.900" stroke="#fafafa" stroke-width="1.100" fill="none" transform="translate(-.9,.3)"/><path d="M10.400 6.100V11.800M16.400 7.400L15.300 12.700M22.400 10L20.100 14.600M27.500 14.100L23.300 17.800M33 25.400L28 26.600M28.200 31.400H33.900" stroke="#6e6e6e" stroke-width="1.100" fill="none"/><path d="M10.9 29.8L30.9 18" stroke="#000" stroke-width="1.2" fill="none" /><circle cx="9.500" cy="30.500" r="4.200" fill="#f2ffff"/><circle cx="9.5" cy="30.5" r="4.2" fill="none" stroke="#ff0000" stroke-width="1"/><path d="M5.0 30.5h9.0M9.5 26.0v9.0" stroke="#ff0000" stroke-width="1"/></svg></div><div class="btn" style="left:18px;top:838px;width:40px;height:40px"><svg width="38" height="38" viewBox="1 1 38 38"><circle cx="16.3" cy="13.3" r="4" fill="none" stroke="#ff0000" stroke-width="1"/><path d="M12.0 13.3h8.6M16.3 9.0v8.6" stroke="#ff0000" stroke-width="1"/><path d="M17.500 15.500v11.500l2.800-2.400 2 4.400 1.800-.8-2-4.300 3.700-.3z" fill="#fff" stroke="#7d7d7d" stroke-width="1" stroke-linejoin="round"/></svg></div><div class="btn" style="left:58px;top:838px;width:40px;height:40px"><svg width="38" height="38" viewBox="1 1 38 38"><ellipse cx="13" cy="15" rx="2.800" ry="4" fill="none" stroke="#000" stroke-width="1.600"/><path d="M16 13.500h13.500v5.500h-2.500v-2.500h-2v2h-2v-2h-7z" fill="#000"/><circle cx="19" cy="28.8" r="4" fill="none" stroke="#ff0000" stroke-width="1"/><path d="M14.7 28.8h8.6M19 24.5v8.6" stroke="#ff0000" stroke-width="1"/></svg></div><div class="a" style="left:567px;top:175px;width:467px;height:2px;background:#a9a5a0;border-bottom:1px solid #f8f7f5"></div><div class="a" style="left:102px;top:145px;width:466px;height:31px;border:1px solid #a9a5a0;border-bottom:none;border-radius:3px 3px 0 0;background:linear-gradient(#f8f6f3,#efebe7 85%)"></div><svg class="a" style="left:115px;top:153px" width="15" height="15" viewBox="0 0 15 15"><circle cx="6.500" cy="6.500" r="5.300" fill="#f4f4f4" stroke="#2b3f8f" stroke-width="1.900"/><path d="M6.500 3v7M3 6.500h7M4 4l5 5" stroke="#e9a0a0" stroke-width=".6"/><path d="M6.500 6l6.500 6.500" stroke="#e8a020" stroke-width="2"/><path d="M12 11.500l1.800 2" stroke="#d04040" stroke-width="1.800"/></svg><div class="t" style="left:300.70px;top:154.00px;font-size:12.5px;letter-spacing:0.270px;">* Untitled 1</div><svg class="a" style="left:538px;top:155px" width="14" height="13" viewBox="0 0 14 13"><path d="M2.600 .2C5.500 3.600 8.500 7 12.600 9.300C13.100 11 12 12.200 10.300 11.500C7 8.800 4.500 4.800 2.600 .2Z" fill="#111"/><path d="M11.300 .3C12 1.500 11.600 3 10.600 4C8 7.500 4 10.500 .3 11.800C3.500 9 7 5 9.300 1C9.800 .2 10.800 -.2 11.300 .3Z" fill="#111"/></svg><svg class="a" style="left:0;top:0" width="1336" height="955" viewBox="0 0 1336 955"><rect x="127" y="202" width="893" height="589" fill="#fff"/><path d="M152.5 202V791M431.5 202V791M710.5 202V791M989.5 202V791M127 780.5H1020M127 501.5H1020M127 222.5H1020" stroke="#e8e8e8" stroke-width="1" fill="none"/><path d="M152 781.5h1M180 781.5h1M208 781.5h1M236 781.5h1M264 781.5h1M292 781.5h1M320 781.5h1M347 781.5h1M375 781.5h1M403 781.5h1M431 781.5h1M459 781.5h1M487 781.5h1M515 781.5h1M543 781.5h1M571 781.5h1M599 781.5h1M626 781.5h1M654 781.5h1M682 781.5h1M710 781.5h1M738 781.5h1M766 781.5h1M794 781.5h1M822 781.5h1M850 781.5h1M878 781.5h1M905 781.5h1M933 781.5h1M961 781.5h1M989 781.5h1M1017 781.5h1M152 753.5h1M180 753.5h1M208 753.5h1M236 753.5h1M264 753.5h1M292 753.5h1M320 753.5h1M347 753.5h1M375 753.5h1M403 753.5h1M431 753.5h1M459 753.5h1M487 753.5h1M515 753.5h1M543 753.5h1M571 753.5h1M599 753.5h1M626 753.5h1M654 753.5h1M682 753.5h1M710 753.5h1M738 753.5h1M766 753.5h1M794 753.5h1M822 753.5h1M850 753.5h1M878 753.5h1M905 753.5h1M933 753.5h1M961 753.5h1M989 753.5h1M1017 753.5h1M152 725.5h1M180 725.5h1M208 725.5h1M236 725.5h1M264 725.5h1M292 725.5h1M320 725.5h1M347 725.5h1M375 725.5h1M403 725.5h1M431 725.5h1M459 725.5h1M487 725.5h1M515 725.5h1M543 725.5h1M571 725.5h1M599 725.5h1M626 725.5h1M654 725.5h1M682 725.5h1M710 725.5h1M738 725.5h1M766 725.5h1M794 725.5h1M822 725.5h1M850 725.5h1M878 725.5h1M905 725.5h1M933 725.5h1M961 725.5h1M989 725.5h1M1017 725.5h1M152 697.5h1M180 697.5h1M208 697.5h1M236 697.5h1M264 697.5h1M292 697.5h1M320 697.5h1M347 697.5h1M375 697.5h1M403 697.5h1M431 697.5h1M459 697.5h1M487 697.5h1M515 697.5h1M543 697.5h1M571 697.5h1M599 697.5h1M626 697.5h1M654 697.5h1M682 697.5h1M710 697.5h1M738 697.5h1M766 697.5h1M794 697.5h1M822 697.5h1M850 697.5h1M878 697.5h1M905 697.5h1M933 697.5h1M961 697.5h1M989 697.5h1M1017 697.5h1M152 669.5h1M180 669.5h1M208 669.5h1M236 669.5h1M264 669.5h1M292 669.5h1M320 669.5h1M347 669.5h1M375 669.5h1M403 669.5h1M431 669.5h1M459 669.5h1M487 669.5h1M515 669.5h1M543 669.5h1M571 669.5h1M599 669.5h1M626 669.5h1M654 669.5h1M682 669.5h1M710 669.5h1M738 669.5h1M766 669.5h1M794 669.5h1M822 669.5h1M850 669.5h1M878 669.5h1M905 669.5h1M933 669.5h1M961 669.5h1M989 669.5h1M1017 669.5h1M152 641.5h1M180 641.5h1M208 641.5h1M236 641.5h1M264 641.5h1M292 641.5h1M320 641.5h1M347 641.5h1M375 641.5h1M403 641.5h1M431 641.5h1M459 641.5h1M487 641.5h1M515 641.5h1M543 641.5h1M571 641.5h1M599 641.5h1M626 641.5h1M654 641.5h1M682 641.5h1M710 641.5h1M738 641.5h1M766 641.5h1M794 641.5h1M822 641.5h1M850 641.5h1M878 641.5h1M905 641.5h1M933 641.5h1M961 641.5h1M989 641.5h1M1017 641.5h1M152 613.5h1M180 613.5h1M208 613.5h1M236 613.5h1M264 613.5h1M292 613.5h1M320 613.5h1M347 613.5h1M375 613.5h1M403 613.5h1M431 613.5h1M459 613.5h1M487 613.5h1M515 613.5h1M543 613.5h1M571 613.5h1M599 613.5h1M626 613.5h1M654 613.5h1M682 613.5h1M710 613.5h1M738 613.5h1M766 613.5h1M794 613.5h1M822 613.5h1M850 613.5h1M878 613.5h1M905 613.5h1M933 613.5h1M961 613.5h1M989 613.5h1M1017 613.5h1M152 585.5h1M180 585.5h1M208 585.5h1M236 585.5h1M264 585.5h1M292 585.5h1M320 585.5h1M347 585.5h1M375 585.5h1M403 585.5h1M431 585.5h1M459 585.5h1M487 585.5h1M515 585.5h1M543 585.5h1M571 585.5h1M599 585.5h1M626 585.5h1M654 585.5h1M682 585.5h1M710 585.5h1M738 585.5h1M766 585.5h1M794 585.5h1M822 585.5h1M850 585.5h1M878 585.5h1M905 585.5h1M933 585.5h1M961 585.5h1M989 585.5h1M1017 585.5h1M152 557.5h1M180 557.5h1M208 557.5h1M236 557.5h1M264 557.5h1M292 557.5h1M320 557.5h1M347 557.5h1M375 557.5h1M403 557.5h1M431 557.5h1M459 557.5h1M487 557.5h1M515 557.5h1M543 557.5h1M571 557.5h1M599 557.5h1M626 557.5h1M654 557.5h1M682 557.5h1M710 557.5h1M738 557.5h1M766 557.5h1M794 557.5h1M822 557.5h1M850 557.5h1M878 557.5h1M905 557.5h1M933 557.5h1M961 557.5h1M989 557.5h1M1017 557.5h1M152 529.5h1M180 529.5h1M208 529.5h1M236 529.5h1M264 529.5h1M292 529.5h1M320 529.5h1M347 529.5h1M375 529.5h1M403 529.5h1M431 529.5h1M459 529.5h1M487 529.5h1M515 529.5h1M543 529.5h1M571 529.5h1M599 529.5h1M626 529.5h1M654 529.5h1M682 529.5h1M710 529.5h1M738 529.5h1M766 529.5h1M794 529.5h1M822 529.5h1M850 529.5h1M878 529.5h1M905 529.5h1M933 529.5h1M961 529.5h1M989 529.5h1M1017 529.5h1M152 502.5h1M180 502.5h1M208 502.5h1M236 502.5h1M264 502.5h1M292 502.5h1M320 502.5h1M347 502.5h1M375 502.5h1M403 502.5h1M431 502.5h1M459 502.5h1M487 502.5h1M515 502.5h1M543 502.5h1M571 502.5h1M599 502.5h1M626 502.5h1M654 502.5h1M682 502.5h1M710 502.5h1M738 502.5h1M766 502.5h1M794 502.5h1M822 502.5h1M850 502.5h1M878 502.5h1M905 502.5h1M933 502.5h1M961 502.5h1M989 502.5h1M1017 502.5h1M152 474.5h1M180 474.5h1M208 474.5h1M236 474.5h1M264 474.5h1M292 474.5h1M320 474.5h1M347 474.5h1M375 474.5h1M403 474.5h1M431 474.5h1M459 474.5h1M487 474.5h1M515 474.5h1M543 474.5h1M571 474.5h1M599 474.5h1M626 474.5h1M654 474.5h1M682 474.5h1M710 474.5h1M738 474.5h1M766 474.5h1M794 474.5h1M822 474.5h1M850 474.5h1M878 474.5h1M905 474.5h1M933 474.5h1M961 474.5h1M989 474.5h1M1017 474.5h1M152 446.5h1M180 446.5h1M208 446.5h1M236 446.5h1M264 446.5h1M292 446.5h1M320 446.5h1M347 446.5h1M375 446.5h1M403 446.5h1M431 446.5h1M459 446.5h1M487 446.5h1M515 446.5h1M543 446.5h1M571 446.5h1M599 446.5h1M626 446.5h1M654 446.5h1M682 446.5h1M710 446.5h1M738 446.5h1M766 446.5h1M794 446.5h1M822 446.5h1M850 446.5h1M878 446.5h1M905 446.5h1M933 446.5h1M961 446.5h1M989 446.5h1M1017 446.5h1M152 418.5h1M180 418.5h1M208 418.5h1M236 418.5h1M264 418.5h1M292 418.5h1M320 418.5h1M347 418.5h1M375 418.5h1M403 418.5h1M431 418.5h1M459 418.5h1M487 418.5h1M515 418.5h1M543 418.5h1M571 418.5h1M599 418.5h1M626 418.5h1M654 418.5h1M682 418.5h1M710 418.5h1M738 418.5h1M766 418.5h1M794 418.5h1M822 418.5h1M850 418.5h1M878 418.5h1M905 418.5h1M933 418.5h1M961 418.5h1M989 418.5h1M1017 418.5h1M152 390.5h1M180 390.5h1M208 390.5h1M236 390.5h1M264 390.5h1M292 390.5h1M320 390.5h1M347 390.5h1M375 390.5h1M403 390.5h1M431 390.5h1M459 390.5h1M487 390.5h1M515 390.5h1M543 390.5h1M571 390.5h1M599 390.5h1M626 390.5h1M654 390.5h1M682 390.5h1M710 390.5h1M738 390.5h1M766 390.5h1M794 390.5h1M822 390.5h1M850 390.5h1M878 390.5h1M905 390.5h1M933 390.5h1M961 390.5h1M989 390.5h1M1017 390.5h1M152 362.5h1M180 362.5h1M208 362.5h1M236 362.5h1M264 362.5h1M292 362.5h1M320 362.5h1M347 362.5h1M375 362.5h1M403 362.5h1M431 362.5h1M459 362.5h1M487 362.5h1M515 362.5h1M543 362.5h1M571 362.5h1M599 362.5h1M626 362.5h1M654 362.5h1M682 362.5h1M710 362.5h1M738 362.5h1M766 362.5h1M794 362.5h1M822 362.5h1M850 362.5h1M878 362.5h1M905 362.5h1M933 362.5h1M961 362.5h1M989 362.5h1M1017 362.5h1M152 334.5h1M180 334.5h1M208 334.5h1M236 334.5h1M264 334.5h1M292 334.5h1M320 334.5h1M347 334.5h1M375 334.5h1M403 334.5h1M431 334.5h1M459 334.5h1M487 334.5h1M515 334.5h1M543 334.5h1M571 334.5h1M599 334.5h1M626 334.5h1M654 334.5h1M682 334.5h1M710 334.5h1M738 334.5h1M766 334.5h1M794 334.5h1M822 334.5h1M850 334.5h1M878 334.5h1M905 334.5h1M933 334.5h1M961 334.5h1M989 334.5h1M1017 334.5h1M152 306.5h1M180 306.5h1M208 306.5h1M236 306.5h1M264 306.5h1M292 306.5h1M320 306.5h1M347 306.5h1M375 306.5h1M403 306.5h1M431 306.5h1M459 306.5h1M487 306.5h1M515 306.5h1M543 306.5h1M571 306.5h1M599 306.5h1M626 306.5h1M654 306.5h1M682 306.5h1M710 306.5h1M738 306.5h1M766 306.5h1M794 306.5h1M822 306.5h1M850 306.5h1M878 306.5h1M905 306.5h1M933 306.5h1M961 306.5h1M989 306.5h1M1017 306.5h1M152 278.5h1M180 278.5h1M208 278.5h1M236 278.5h1M264 278.5h1M292 278.5h1M320 278.5h1M347 278.5h1M375 278.5h1M403 278.5h1M431 278.5h1M459 278.5h1M487 278.5h1M515 278.5h1M543 278.5h1M571 278.5h1M599 278.5h1M626 278.5h1M654 278.5h1M682 278.5h1M710 278.5h1M738 278.5h1M766 278.5h1M794 278.5h1M822 278.5h1M850 278.5h1M878 278.5h1M905 278.5h1M933 278.5h1M961 278.5h1M989 278.5h1M1017 278.5h1M152 250.5h1M180 250.5h1M208 250.5h1M236 250.5h1M264 250.5h1M292 250.5h1M320 250.5h1M347 250.5h1M375 250.5h1M403 250.5h1M431 250.5h1M459 250.5h1M487 250.5h1M515 250.5h1M543 250.5h1M571 250.5h1M599 250.5h1M626 250.5h1M654 250.5h1M682 250.5h1M710 250.5h1M738 250.5h1M766 250.5h1M794 250.5h1M822 250.5h1M850 250.5h1M878 250.5h1M905 250.5h1M933 250.5h1M961 250.5h1M989 250.5h1M1017 250.5h1M152 223.5h1M180 223.5h1M208 223.5h1M236 223.5h1M264 223.5h1M292 223.5h1M320 223.5h1M347 223.5h1M375 223.5h1M403 223.5h1M431 223.5h1M459 223.5h1M487 223.5h1M515 223.5h1M543 223.5h1M571 223.5h1M599 223.5h1M626 223.5h1M654 223.5h1M682 223.5h1M710 223.5h1M738 223.5h1M766 223.5h1M794 223.5h1M822 223.5h1M850 223.5h1M878 223.5h1M905 223.5h1M933 223.5h1M961 223.5h1M989 223.5h1M1017 223.5h1" stroke="#c6c6c6" stroke-width="1" fill="none"/><path d="M127 516.500H1020M859.500 202V791" stroke="#fad26c" stroke-width="1" stroke-dasharray="3.500 2.500" fill="none"/><path d="M152.5 222.5H989.5V780.5H152.5ZM570.5 222.5V780.5M152.5 501.5H989.5" stroke="#161616" stroke-width="1" fill="none"/><path d="M695.7 248.2L809.6 278.8L839.5 391.9L756.5 475.6L642.2 444.7L612.4 331.6ZM839.500 391.900V501.5A269.0 269.0 0 0 1 570.5 770.5H197.500M197.500 234V770.5M529.500 231.500V780.5" stroke="#ff00ff" stroke-width="1" fill="none"/><text x="152.82" y="239.3" font-family="Liberation Sans, sans-serif" font-size="19.3" letter-spacing="0.925" fill="#000">P.V.</text><text x="937.39" y="244.1" font-family="Liberation Sans, sans-serif" font-size="27" letter-spacing="1.251" fill="#000">P.L.</text><text x="938.54" y="498.8" font-family="Liberation Sans, sans-serif" font-size="27.5" letter-spacing="1.131" fill="#000">L.T.</text><text x="151.59" y="778.1" font-family="Liberation Sans, sans-serif" font-size="27" letter-spacing="1.289" fill="#000">P.O.</text><path d="M131 780.500H172.500M152.500 760V791" stroke="#ff0000" stroke-width="1" fill="none"/><circle cx="197" cy="780.500" r="4.500" fill="none" stroke="#8c1c1c" stroke-width="1"/><path d="M192 780.500h10M197 775.500v10" stroke="#8c1c1c" stroke-width="1"/><rect x="103" y="177" width="931" height="25" fill="#efebe7"/><rect x="103" y="202" width="24" height="589" fill="#efebe7"/><path d="M152.5 195V202M180.5 198.500V202M207.5 195V202M235.5 198.500V202M263.5 195V202M291.5 198.500V202M319.5 195V202M347.5 198.500V202M375.5 195V202M403.5 198.500V202M431.5 195V202M459.5 198.500V202M486.5 195V202M514.5 198.500V202M542.5 195V202M570.5 198.500V202M598.5 195V202M626.5 198.500V202M654.5 195V202M682.5 198.500V202M710.5 195V202M738.5 198.500V202M765.5 195V202M793.5 198.500V202M821.5 195V202M849.5 198.500V202M877.5 195V202M905.5 198.500V202M933.5 195V202M961.5 198.500V202M989.5 195V202M1017.5 198.500V202M120 780.5H127M123.500 752.5H127M120 724.5H127M123.500 696.5H127M120 668.5H127M123.500 641.5H127M120 613.5H127M123.500 585.5H127M120 557.5H127M123.500 529.5H127M120 501.5H127M123.500 473.5H127M120 445.5H127M123.500 417.5H127M120 389.5H127M123.500 362.5H127M120 334.5H127M123.500 306.5H127M120 278.5H127M123.500 250.5H127M120 222.5H127" stroke="#000" stroke-width="1" fill="none"/><text x="152.25" y="190" font-family="Liberation Sans, sans-serif" font-size="12" text-anchor="middle" fill="#000" letter-spacing=".15">0</text><text x="207.25" y="190" font-family="Liberation Sans, sans-serif" font-size="12" text-anchor="middle" fill="#000" letter-spacing=".15">20</text><text x="263.25" y="190" font-family="Liberation Sans, sans-serif" font-size="12" text-anchor="middle" fill="#000" letter-spacing=".15">40</text><text x="319.25" y="190" font-family="Liberation Sans, sans-serif" font-size="12" text-anchor="middle" fill="#000" letter-spacing=".15">60</text><text x="375.25" y="190" font-family="Liberation Sans, sans-serif" font-size="12" text-anchor="middle" fill="#000" letter-spacing=".15">80</text><text x="431.25" y="190" font-family="Liberation Sans, sans-serif" font-size="12" text-anchor="middle" fill="#000" letter-spacing=".15">100</text><text x="486.25" y="190" font-family="Liberation Sans, sans-serif" font-size="12" text-anchor="middle" fill="#000" letter-spacing=".15">120</text><text x="542.25" y="190" font-family="Liberation Sans, sans-serif" font-size="12" text-anchor="middle" fill="#000" letter-spacing=".15">140</text><text x="598.25" y="190" font-family="Liberation Sans, sans-serif" font-size="12" text-anchor="middle" fill="#000" letter-spacing=".15">160</text><text x="654.25" y="190" font-family="Liberation Sans, sans-serif" font-size="12" text-anchor="middle" fill="#000" letter-spacing=".15">180</text><text x="710.25" y="190" font-family="Liberation Sans, sans-serif" font-size="12" text-anchor="middle" fill="#000" letter-spacing=".15">200</text><text x="765.25" y="190" font-family="Liberation Sans, sans-serif" font-size="12" text-anchor="middle" fill="#000" letter-spacing=".15">220</text><text x="821.25" y="190" font-family="Liberation Sans, sans-serif" font-size="12" text-anchor="middle" fill="#000" letter-spacing=".15">240</text><text x="877.25" y="190" font-family="Liberation Sans, sans-serif" font-size="12" text-anchor="middle" fill="#000" letter-spacing=".15">260</text><text x="933.25" y="190" font-family="Liberation Sans, sans-serif" font-size="12" text-anchor="middle" fill="#000" letter-spacing=".15">280</text><text x="989.25" y="190" font-family="Liberation Sans, sans-serif" font-size="12" text-anchor="middle" fill="#000" letter-spacing=".15">300</text><text transform="translate(114.400 780.75) rotate(-90)" font-family="Liberation Sans, sans-serif" font-size="12" text-anchor="middle" fill="#000" letter-spacing=".3">0</text><text transform="translate(114.400 724.75) rotate(-90)" font-family="Liberation Sans, sans-serif" font-size="12" text-anchor="middle" fill="#000" letter-spacing=".3">20</text><text transform="translate(114.400 668.75) rotate(-90)" font-family="Liberation Sans, sans-serif" font-size="12" text-anchor="middle" fill="#000" letter-spacing=".3">40</text><text transform="translate(114.400 613.75) rotate(-90)" font-family="Liberation Sans, sans-serif" font-size="12" text-anchor="middle" fill="#000" letter-spacing=".3">60</text><text transform="translate(114.400 557.75) rotate(-90)" font-family="Liberation Sans, sans-serif" font-size="12" text-anchor="middle" fill="#000" letter-spacing=".3">80</text><text transform="translate(114.400 501.75) rotate(-90)" font-family="Liberation Sans, sans-serif" font-size="12" text-anchor="middle" fill="#000" letter-spacing=".3">100</text><text transform="translate(114.400 445.75) rotate(-90)" font-family="Liberation Sans, sans-serif" font-size="12" text-anchor="middle" fill="#000" letter-spacing=".3">120</text><text transform="translate(114.400 389.75) rotate(-90)" font-family="Liberation Sans, sans-serif" font-size="12" text-anchor="middle" fill="#000" letter-spacing=".3">140</text><text transform="translate(114.400 334.75) rotate(-90)" font-family="Liberation Sans, sans-serif" font-size="12" text-anchor="middle" fill="#000" letter-spacing=".3">160</text><text transform="translate(114.400 278.75) rotate(-90)" font-family="Liberation Sans, sans-serif" font-size="12" text-anchor="middle" fill="#000" letter-spacing=".3">180</text><text transform="translate(114.400 222.75) rotate(-90)" font-family="Liberation Sans, sans-serif" font-size="12" text-anchor="middle" fill="#000" letter-spacing=".3">200</text><path d="M856.800 195h5.400l-2.700 3.300z" fill="#000"/><path d="M120.500 513.500v6l3.500-3z" fill="#000"/></svg><div class="a" style="left:1020px;top:202px;width:14px;height:589px;background:#e4e2df;border-left:1px solid #d2cfcb"></div><div class="a" style="left:1020px;top:202px;width:14px;height:14px;background:#f5f4f2"></div><div class="a" style="left:1020px;top:778px;width:14px;height:13px;background:#f5f4f2"></div><div class="a" style="left:1020px;top:418px;width:14px;height:155px;background:linear-gradient(90deg,#ffffff,#f3f2f0 50%,#e6e4e1);border:1px solid #c9c6c2"></div><svg class="a" style="left:1020px;top:202px" width="14" height="589"><path d="M3 9.500h8l-4-5zM3 580h8l-4 4.500z" fill="#4d4d4d"/></svg><div class="a" style="left:127px;top:792px;width:839px;height:14px;background:#e4e2df;border-top:1px solid #d2cfcb"></div><div class="a" style="left:127px;top:792px;width:13px;height:14px;background:#f5f4f2"></div><div class="a" style="left:953px;top:792px;width:13px;height:14px;background:#f5f4f2"></div><div class="a" style="left:398px;top:792px;width:299px;height:14px;background:linear-gradient(#ffffff,#f3f2f0 50%,#e6e4e1);border:1px solid #c9c6c2"></div><svg class="a" style="left:127px;top:792px" width="839" height="14"><path d="M9.500 3v8l-5-4zM829.500 3v8l5-4z" fill="#4d4d4d"/></svg><div class="t" style="left:986.65px;top:792.00px;font-size:12.5px;letter-spacing:-0.252px;">10 &lt; 100</div><svg class="a" style="left:561px;top:809px" width="19" height="5"><path d="M1 1.50h1M4 1.50h1M7 1.50h1M10 1.50h1M13 1.50h1M16 1.50h1" stroke="#fdfcfb" stroke-width="1"/><path d="M0 0.50h1M3 0.50h1M6 0.50h1M9 0.50h1M12 0.50h1M15 0.50h1" stroke="#c3bfb9" stroke-width="1"/></svg><div class="a" style="left:103px;top:814px;width:931px;height:53px;background:#fff;border-bottom:1px solid #b9b5b0"></div><div class="t" style="left:107.11px;top:816.00px;font-size:12.5px;letter-spacing:-0.435px;color:#0000e0;font-style:italic;">Command:</div><div class="t" style="left:168.37px;top:816.00px;font-size:12.5px;letter-spacing:-0.118px;color:#0000e0;">arcc</div><div class="t" style="left:107.11px;top:833.00px;font-size:12.5px;letter-spacing:-0.435px;color:#0000e0;font-style:italic;">Command:</div><div class="t" style="left:168.06px;top:833.00px;font-size:12.5px;letter-spacing:0.464px;color:#0000e0;">linemenu</div><div class="t" style="left:107.11px;top:850.00px;font-size:12.5px;letter-spacing:-0.435px;color:#0000e0;font-style:italic;">Command:</div><div class="t" style="left:168.06px;top:850.00px;font-size:12.5px;letter-spacing:0.464px;color:#0000e0;">linemenu</div><div class="a" style="left:1019px;top:814px;width:16px;height:53px;background:#fbfaf9;border:1px solid #b9b5b0;border-top:none"></div><div class="a" style="left:1020px;top:828px;width:14px;height:24px;background:#fdfdfc;border-top:1px solid #c9c5c0;border-bottom:1px solid #c9c5c0"></div><svg class="a" style="left:1020px;top:814px" width="14" height="52"><path d="M3 9.500h8l-4-5zM3 42.500h8l-4 5z" fill="#4d4d4d"/></svg><div class="a" style="left:102px;top:813px;width:1px;height:80px;background:#9d9a95"></div><div class="a" style="left:103px;top:892px;width:932px;height:1px;background:#c9c5c0"></div><div class="t" style="left:102.57px;top:873.00px;font-size:12.5px;letter-spacing:0.247px;">First point:</div><div class="a" style="left:167px;top:871px;width:841px;height:19px;background:#fff"></div><div class="a" style="left:103px;top:867px;width:931px;height:1px;background:#fff"></div><div class="a" style="left:1010px;top:869px;width:23px;height:22px;border:1px solid #b5b1ac;border-radius:3px;background:linear-gradient(#f8f7f5,#e9e6e2)"></div><svg class="a" style="left:1014px;top:874px" width="15" height="12"><rect x=".5" y=".5" width="13.500" height="10.500" fill="#fff" stroke="#111" stroke-width="1"/><rect x=".5" y=".5" width="13.500" height="2.500" fill="#111"/></svg><div class="t" style="left:15.97px;top:899.00px;font-size:12.5px;letter-spacing:-0.147px;">254.0475,94.0134</div><div class="t" style="left:15.62px;top:919.00px;font-size:12.5px;letter-spacing:-0.233px;">@237.9232,94.0134</div><div class="a" style="left:233px;top:896px;width:1px;height:40px;background:#bdb9b4"></div><div class="t" style="left:237.07px;top:899.00px;font-size:12.5px;letter-spacing:-0.141px;">270.885&lt;20°</div><div class="t" style="left:236.72px;top:919.00px;font-size:12.5px;letter-spacing:-0.225px;">@255.8241&lt;22°</div><div class="a" style="left:454px;top:908px;width:1px;height:18px;background-image:linear-gradient(#bdb9b4 50%,transparent 50%);background-size:1px 2px"></div><div class="a" style="left:831px;top:908px;width:1px;height:18px;background-image:linear-gradient(#bdb9b4 50%,transparent 50%);background-size:1px 2px"></div><div class="a" style="left:1112px;top:908px;width:1px;height:18px;background-image:linear-gradient(#bdb9b4 50%,transparent 50%);background-size:1px 2px"></div><div class="t" style="left:561.57px;top:909.00px;font-size:12.5px;letter-spacing:0.254px;">First point</div><svg class="a" style="left:632px;top:899px" width="21" height="32" viewBox="0 0 21 32"><rect x="1.500" y="1.500" width="18" height="29" rx="8" fill="#fff" stroke="#555" stroke-width="1"/><path d="M1.500 14.500h18M10.500 1.500v13" stroke="#555" stroke-width="1" fill="none"/><rect x="9" y="4" width="3" height="7" rx="1.500" fill="#fff" stroke="#555" stroke-width=".9"/></svg><div class="t" style="left:665.57px;top:909.00px;font-size:12.5px;letter-spacing:-0.188px;">Cancel</div><div class="t" style="left:834.67px;top:909.00px;font-size:12.5px;letter-spacing:0.095px;">No entities selected.</div><svg class="a" style="left:1308px;top:925px" width="13" height="13"><path d="M11.500 1v1M8.500 4v1M11.500 4v1M5.500 7v1M8.500 7v1M11.500 7v1M2.500 10v1M5.500 10v1M8.500 10v1M11.500 10v1" stroke="#b0aca6" stroke-width="1"/></svg><svg class="a" style="left:1036px;top:512px" width="4" height="20"><path d="M1 1.50h1M1 4.50h1M1 7.50h1M1 10.50h1M1 13.50h1M1 16.50h1" stroke="#fdfcfb" stroke-width="1"/><path d="M0 0.50h1M0 3.50h1M0 6.50h1M0 9.50h1M0 12.50h1M0 15.50h1" stroke="#c3bfb9" stroke-width="1"/></svg><div class="t" style="left:1043.47px;top:147.00px;font-size:12.5px;letter-spacing:-0.042px;">Layer List</div><svg class="a" style="left:1258px;top:149px" width="26" height="12" viewBox="0 0 26 12"><rect x=".5" y=".5" width="10.200" height="10.200" rx="2" fill="none" stroke="#57544f" stroke-width="1"/><rect x="5" y="2.700" width="3.400" height="3.400" rx=".8" fill="none" stroke="#57544f" stroke-width=".9"/><rect x="2.700" y="4.800" width="3.600" height="3.600" rx=".8" fill="#f3f1ee" stroke="#57544f" stroke-width=".9"/><rect x="14.600" y=".5" width="10.200" height="10.200" rx="2" fill="none" stroke="#57544f" stroke-width="1"/><path d="M17.300 3.200l4.800 4.800M22.100 3.200l-4.800 4.800" stroke="#57544f" stroke-width="1.900"/></svg><div class="a" style="left:1040px;top:164px;width:49px;height:23px;border:1px solid #ada9a3;border-radius:3px;background:linear-gradient(#fbfaf9,#f0eeeb 60%,#e4e1dd);display:flex;align-items:center;justify-content:center;padding:0 2px 2px 0"><svg width="16" height="12" viewBox="0 0 16 12"><path d="M.3 5.600C2 1.600 5 0 7.500 0C10.500 0 13.500 2 14.800 6C13 9.500 10.500 11.500 7.500 11.500C4.500 11.500 1.800 9.500 .3 5.600Z" fill="#000"/><path d="M2.700 6.300C4 4.600 5.500 4 7.500 4C9.800 4 11.400 4.800 12.500 6.500C11.300 8.500 9.800 9.600 7.500 9.600C5.200 9.600 3.800 8.400 2.700 6.300Z" fill="#fff"/><circle cx="7.300" cy="5.600" r="2.500" fill="#000"/><circle cx="6.500" cy="4.500" r=".6" fill="#fff" opacity=".55"/></svg></div><div class="a" style="left:1089px;top:164px;width:49px;height:23px;border:1px solid #ada9a3;border-radius:3px;background:linear-gradient(#fbfaf9,#f0eeeb 60%,#e4e1dd);display:flex;align-items:center;justify-content:center;padding:0 2px 2px 0"><svg width="16" height="12" viewBox="0 0 16 12"><path d="M.3 5.600C2 1.600 5 0 7.500 0C10.500 0 13.500 2 14.800 6C13 9.500 10.500 11.500 7.500 11.500C4.500 11.500 1.800 9.500 .3 5.600Z" fill="#a3a3a3"/><path d="M2.700 6.300C4 4.600 5.500 4 7.500 4C9.800 4 11.400 4.800 12.500 6.500C11.300 8.500 9.800 9.600 7.500 9.600C5.200 9.600 3.800 8.400 2.700 6.300Z" fill="#ededed"/><circle cx="7.300" cy="5.600" r="2.500" fill="#a3a3a3"/><circle cx="6.500" cy="4.500" r=".6" fill="#ededed" opacity=".55"/></svg></div><div class="a" style="left:1138px;top:164px;width:49px;height:23px;border:1px solid #ada9a3;border-radius:3px;background:linear-gradient(#fbfaf9,#f0eeeb 60%,#e4e1dd);display:flex;align-items:center;justify-content:center;padding:0 2px 2px 0"><svg width="15" height="15"><path d="M7.500 1v13M1 7.500h13" stroke="#e00000" stroke-width="2.600"/></svg></div><div class="a" style="left:1187px;top:164px;width:49px;height:23px;border:1px solid #ada9a3;border-radius:3px;background:linear-gradient(#fbfaf9,#f0eeeb 60%,#e4e1dd);display:flex;align-items:center;justify-content:center;padding:0 2px 2px 0"><svg width="15" height="15"><path d="M1.500 7.500h12" stroke="#e00000" stroke-width="2.800"/></svg></div><div class="a" style="left:1236px;top:164px;width:49px;height:23px;border:1px solid #ada9a3;border-radius:3px;background:linear-gradient(#fbfaf9,#f0eeeb 60%,#e4e1dd);display:flex;align-items:center;justify-content:center;padding:0 2px 2px 0"><svg width="18" height="18" viewBox="0 0 18 18"><path d="M14 1.500l2.500 2.500-10.500 10.500-4.500 2 2-4.500z" fill="#e7a63a" stroke="#9a6a1a" stroke-width=".6" stroke-linejoin="round"/><path d="M13 2.500l2.500 2.500" stroke="#d03030" stroke-width="1.800"/><path d="M1.500 16.500l1-2.300 1.300 1.300z" fill="#333"/></svg></div><div class="a" style="left:1040px;top:187px;width:245px;height:393px;background:#fff;border:1px solid #b3afaa"></div><svg class="a" style="left:1044px;top:190px" width="16" height="12" viewBox="0 0 16 12"><path d="M.3 5.600C2 1.600 5 0 7.500 0C10.500 0 13.500 2 14.800 6C13 9.500 10.500 11.500 7.500 11.500C4.500 11.500 1.800 9.500 .3 5.600Z" fill="#000"/><path d="M2.700 6.300C4 4.600 5.500 4 7.500 4C9.800 4 11.400 4.800 12.500 6.500C11.300 8.500 9.800 9.600 7.500 9.600C5.200 9.600 3.800 8.400 2.700 6.300Z" fill="#fff"/><circle cx="7.300" cy="5.600" r="2.500" fill="#000"/><circle cx="6.500" cy="4.500" r=".6" fill="#fff" opacity=".55"/></svg><svg class="a" style="left:1064px;top:189px" width="11" height="14" viewBox="0 0 11 14"><path d="M2 7.500V4.700a3.300 3.300 0 0 1 6.600 0V7.500" fill="none" stroke="#d2d2d2" stroke-width="1.200"/><rect x=".4" y="7" width="9.800" height="6.700" fill="#9a9a9a"/></svg><div class="t" style="left:1081.91px;top:189.00px;font-size:12.5px;letter-spacing:0.000px;color:#000;">0</div><svg class="a" style="left:1044px;top:207px" width="16" height="12" viewBox="0 0 16 12"><path d="M.3 5.600C2 1.600 5 0 7.500 0C10.500 0 13.500 2 14.800 6C13 9.500 10.500 11.500 7.500 11.500C4.500 11.500 1.800 9.500 .3 5.600Z" fill="#000"/><path d="M2.700 6.300C4 4.600 5.500 4 7.500 4C9.800 4 11.400 4.800 12.500 6.500C11.300 8.500 9.800 9.600 7.500 9.600C5.200 9.600 3.800 8.400 2.700 6.300Z" fill="#fff"/><circle cx="7.300" cy="5.600" r="2.500" fill="#000"/><circle cx="6.500" cy="4.500" r=".6" fill="#fff" opacity=".55"/></svg><svg class="a" style="left:1064px;top:206px" width="11" height="14" viewBox="0 0 11 14"><path d="M2 7.500V4.700a3.300 3.300 0 0 1 6.600 0V7.500" fill="none" stroke="#d2d2d2" stroke-width="1.200"/><rect x=".4" y="7" width="9.800" height="6.700" fill="#9a9a9a"/></svg><div class="t" style="left:1081.92px;top:206.00px;font-size:12.5px;letter-spacing:0.584px;color:#000;">3h</div><svg class="a" style="left:1044px;top:224px" width="16" height="12" viewBox="0 0 16 12"><path d="M.3 5.600C2 1.600 5 0 7.500 0C10.500 0 13.500 2 14.800 6C13 9.500 10.500 11.500 7.500 11.500C4.500 11.500 1.800 9.500 .3 5.600Z" fill="#000"/><path d="M2.700 6.300C4 4.600 5.500 4 7.500 4C9.800 4 11.400 4.800 12.500 6.500C11.300 8.500 9.800 9.600 7.500 9.600C5.200 9.600 3.800 8.400 2.700 6.300Z" fill="#fff"/><circle cx="7.300" cy="5.600" r="2.500" fill="#000"/><circle cx="6.500" cy="4.500" r=".6" fill="#fff" opacity=".55"/></svg><svg class="a" style="left:1064px;top:223px" width="11" height="14" viewBox="0 0 11 14"><path d="M2 7.500V4.700a3.300 3.300 0 0 1 6.600 0V7.500" fill="none" stroke="#d2d2d2" stroke-width="1.200"/><rect x=".4" y="7" width="9.800" height="6.700" fill="#9a9a9a"/></svg><div class="t" style="left:1081.92px;top:223.00px;font-size:12.5px;letter-spacing:0.410px;color:#000;">3h-tratt</div><svg class="a" style="left:1044px;top:241px" width="16" height="12" viewBox="0 0 16 12"><path d="M.3 5.600C2 1.600 5 0 7.500 0C10.500 0 13.500 2 14.800 6C13 9.500 10.500 11.500 7.500 11.500C4.500 11.500 1.800 9.500 .3 5.600Z" fill="#000"/><path d="M2.700 6.300C4 4.600 5.500 4 7.500 4C9.800 4 11.400 4.800 12.500 6.500C11.300 8.500 9.800 9.600 7.500 9.600C5.200 9.600 3.800 8.400 2.700 6.300Z" fill="#fff"/><circle cx="7.300" cy="5.600" r="2.500" fill="#000"/><circle cx="6.500" cy="4.500" r=".6" fill="#fff" opacity=".55"/></svg><svg class="a" style="left:1064px;top:240px" width="11" height="14" viewBox="0 0 11 14"><path d="M2 7.500V4.700a3.300 3.300 0 0 1 6.600 0V7.500" fill="none" stroke="#d2d2d2" stroke-width="1.200"/><rect x=".4" y="7" width="9.800" height="6.700" fill="#9a9a9a"/></svg><div class="t" style="left:1081.53px;top:240.00px;font-size:12.5px;letter-spacing:1.088px;color:#000;">hb</div><svg class="a" style="left:1044px;top:258px" width="16" height="12" viewBox="0 0 16 12"><path d="M.3 5.600C2 1.600 5 0 7.500 0C10.500 0 13.500 2 14.800 6C13 9.500 10.500 11.500 7.500 11.500C4.500 11.500 1.800 9.500 .3 5.600Z" fill="#000"/><path d="M2.700 6.300C4 4.600 5.500 4 7.500 4C9.800 4 11.400 4.800 12.500 6.500C11.300 8.500 9.800 9.600 7.500 9.600C5.200 9.600 3.800 8.400 2.700 6.300Z" fill="#fff"/><circle cx="7.300" cy="5.600" r="2.500" fill="#000"/><circle cx="6.500" cy="4.500" r=".6" fill="#fff" opacity=".55"/></svg><svg class="a" style="left:1064px;top:257px" width="11" height="14" viewBox="0 0 11 14"><path d="M2 7.500V4.700a3.300 3.300 0 0 1 6.600 0V7.500" fill="none" stroke="#d2d2d2" stroke-width="1.200"/><rect x=".4" y="7" width="9.800" height="6.700" fill="#9a9a9a"/></svg><div class="t" style="left:1081.53px;top:257.00px;font-size:12.5px;letter-spacing:0.508px;color:#000;">hb-tratt</div><div class="a" style="left:1041px;top:273px;width:243px;height:17px;background:#308cc6"></div><svg class="a" style="left:1044px;top:275px" width="16" height="12" viewBox="0 0 16 12"><path d="M.3 5.600C2 1.600 5 0 7.500 0C10.500 0 13.500 2 14.800 6C13 9.500 10.500 11.500 7.500 11.500C4.500 11.500 1.800 9.500 .3 5.600Z" fill="#0e4a73"/><path d="M2.700 6.300C4 4.600 5.500 4 7.500 4C9.800 4 11.400 4.800 12.500 6.500C11.300 8.500 9.800 9.600 7.500 9.600C5.200 9.600 3.800 8.400 2.700 6.300Z" fill="#308cc6"/><circle cx="7.300" cy="5.600" r="2.500" fill="#0e4a73"/><circle cx="6.500" cy="4.500" r=".6" fill="#308cc6" opacity=".55"/></svg><svg class="a" style="left:1064px;top:274px" width="11" height="14" viewBox="0 0 11 14"><path d="M2 7.500V4.700a3.300 3.300 0 0 1 6.600 0V7.500" fill="none" stroke="#5f9dc9" stroke-width="1.200"/><rect x=".4" y="7" width="9.800" height="6.700" fill="#6a95b4"/></svg><div class="t" style="left:1081.88px;top:274.00px;font-size:12.5px;letter-spacing:0.625px;color:#fff;">quote</div><svg class="a" style="left:1155px;top:582px" width="19" height="5"><path d="M1 1.50h1M4 1.50h1M7 1.50h1M10 1.50h1M13 1.50h1M16 1.50h1" stroke="#fdfcfb" stroke-width="1"/><path d="M0 0.50h1M3 0.50h1M6 0.50h1M9 0.50h1M12 0.50h1M15 0.50h1" stroke="#c3bfb9" stroke-width="1"/></svg><div class="t" style="left:1043.47px;top:588.00px;font-size:12.5px;letter-spacing:0.190px;">Property Editor</div><svg class="a" style="left:1258px;top:590px" width="26" height="12" viewBox="0 0 26 12"><rect x=".5" y=".5" width="10.200" height="10.200" rx="2" fill="none" stroke="#57544f" stroke-width="1"/><rect x="5" y="2.700" width="3.400" height="3.400" rx=".8" fill="none" stroke="#57544f" stroke-width=".9"/><rect x="2.700" y="4.800" width="3.600" height="3.600" rx=".8" fill="#f3f1ee" stroke="#57544f" stroke-width=".9"/><rect x="14.600" y=".5" width="10.200" height="10.200" rx="2" fill="none" stroke="#57544f" stroke-width="1"/><path d="M17.300 3.200l4.800 4.800M22.100 3.200l-4.800 4.800" stroke="#57544f" stroke-width="1.900"/></svg><div class="a" style="left:1040px;top:605px;width:245px;height:288px;border:1px solid #b9b5b0;background:#efebe7"></div><div class="t" style="left:1050.13px;top:620.00px;font-size:12.5px;letter-spacing:0.102px;">Selection:</div><div class="combo" style="left:1111px;top:615px;width:164px;height:25px"></div><div class="t" style="left:1115.07px;top:620.00px;font-size:12.5px;letter-spacing:0.097px;">No Selection</div><svg class="a" style="left:1259px;top:625px" width="10" height="6"><path d="M1 1h8l-4 4.500z" fill="#333"/></svg><div class="t" style="left:1050.07px;top:648.00px;font-size:12.5px;letter-spacing:0.027px;color:#bdbab6;">General Properties</div><div class="a" style="left:1051px;top:667px;width:224px;height:204px;border:1px solid #d3cfca;border-radius:2px;background:#ece8e4"></div><div class="t" style="left:1111.57px;top:680.00px;font-size:12.5px;letter-spacing:0.105px;color:#bdbab6;">Layer:</div><div class="combo" style="left:1152px;top:675px;width:111px;height:25px;background:linear-gradient(#fbfaf9,#f6f4f2 50%,#efece9);border-color:#c3bfba"></div><svg class="a" style="left:1248px;top:685px" width="9" height="6"><path d="M.3 .5h7.600l-3.800 4.200z" fill="#dcd9d5"/></svg><div class="t" style="left:1112.47px;top:707.00px;font-size:12.5px;letter-spacing:0.207px;color:#bdbab6;">Color:</div><div class="combo" style="left:1152px;top:702px;width:111px;height:25px;background:linear-gradient(#fbfaf9,#f6f4f2 50%,#efece9);border-color:#c3bfba"></div><svg class="a" style="left:1248px;top:712px" width="9" height="6"><path d="M.3 .5h7.600l-3.800 4.200z" fill="#dcd9d5"/></svg><div class="a" style="left:1158px;top:709px;width:16px;height:11px;border:1px solid #4a4a4a;background:#fdfcfb"></div><div class="t" style="left:1176.37px;top:707.00px;font-size:12.5px;letter-spacing:-0.157px;color:#bdbab6;">By Layer</div><div class="t" style="left:1080.67px;top:734.00px;font-size:12.5px;letter-spacing:0.293px;color:#bdbab6;">Lineweight:</div><div class="combo" style="left:1152px;top:729px;width:111px;height:25px;background:linear-gradient(#fbfaf9,#f6f4f2 50%,#efece9);border-color:#c3bfba"></div><svg class="a" style="left:1248px;top:739px" width="9" height="6"><path d="M.3 .5h7.600l-3.800 4.200z" fill="#dcd9d5"/></svg><div class="a" style="left:1158px;top:741px;width:16px;height:1px;background:#666"></div><div class="t" style="left:1176.37px;top:734.00px;font-size:12.5px;letter-spacing:-0.157px;color:#bdbab6;">By Layer</div><div class="t" style="left:1094.47px;top:761.00px;font-size:12.5px;letter-spacing:0.204px;color:#bdbab6;">Linetype:</div><div class="combo" style="left:1152px;top:756px;width:111px;height:25px;background:linear-gradient(#fbfaf9,#f6f4f2 50%,#efece9);border-color:#c3bfba"></div><svg class="a" style="left:1248px;top:766px" width="9" height="6"><path d="M.3 .5h7.600l-3.800 4.200z" fill="#dcd9d5"/></svg><div class="t" style="left:1156.27px;top:761.00px;font-size:12.5px;letter-spacing:-0.157px;color:#bdbab6;">By Layer</div><div class="t" style="left:1062.47px;top:788.00px;font-size:12.5px;letter-spacing:-0.079px;color:#bdbab6;">Linetype Scale:</div><div class="fld" style="left:1152px;top:783px;width:111px;height:25px;border-color:#b9b5b0"></div><div class="t" style="left:1076.37px;top:815.00px;font-size:12.5px;letter-spacing:0.240px;color:#bdbab6;">Draw Order:</div><div class="fld" style="left:1152px;top:810px;width:111px;height:25px;border-color:#b9b5b0"></div><div class="t" style="left:1102.37px;top:842.00px;font-size:12.5px;letter-spacing:0.230px;color:#bdbab6;">Handle:</div><div class="fld" style="left:1152px;top:837px;width:111px;height:25px;border-color:#b9b5b0"></div><div class="a" style="left:1285px;top:145px;width:1px;height:748px;background:#c4c0ba"></div><div class="a" style="left:1286px;top:145px;width:36px;height:748px;background:linear-gradient(90deg,#f8f6f2,#efebe7)"></div><svg class="a" style="left:1297px;top:150px" width="19" height="8"><path d="M1 1.50h1M1 4.50h1M4 1.50h1M4 4.50h1M7 1.50h1M7 4.50h1M10 1.50h1M10 4.50h1M13 1.50h1M13 4.50h1M16 1.50h1M16 4.50h1" stroke="#fdfcfb" stroke-width="1"/><path d="M0 0.50h1M0 3.50h1M3 0.50h1M3 3.50h1M6 0.50h1M6 3.50h1M9 0.50h1M9 3.50h1M12 0.50h1M12 3.50h1M15 0.50h1M15 3.50h1" stroke="#c3bfb9" stroke-width="1"/></svg><div class="tbon" style="left:1289px;top:158px;width:29px;height:29px;background:linear-gradient(#9a9a9a,#c4c4c4 60%,#dadada)"></div><div class="ic" style="left:1291px;top:160px"><svg width="24" height="24" viewBox="0 0 24 24"><rect x="1.500" y="1.500" width="21" height="21" rx="1.500" fill="#fff" stroke="#a8a8a8" stroke-width="1"/><rect x="2" y="2" width="20" height="3.500" fill="#000"/><rect x="2.500" y="2.500" width="2.500" height="2.500" fill="#fff"/><path d="M7 11l6-3v9l-6 3z" fill="#bdbdbd" stroke="#888" stroke-width=".6"/><path d="M10 10.500l6-3v9l-6 3z" fill="#f4b8b8" stroke="#999" stroke-width=".6"/></svg></div><div class="ic" style="left:1291px;top:190px"><svg width="24" height="24" viewBox="0 0 24 24"><rect x="1.500" y="1.500" width="21" height="21" rx="1.500" fill="#fff" stroke="#a8a8a8" stroke-width="1"/><rect x="2" y="2" width="20" height="3.500" fill="#000"/><rect x="2.500" y="2.500" width="2.500" height="2.500" fill="#fff"/><rect x="7" y="9" width="7" height="6" fill="#f3e6a8" stroke="#9a8a4a" stroke-width=".7"/><circle cx="14" cy="14.500" r="3.300" fill="#f3e6a8" stroke="#9a8a4a" stroke-width=".7"/></svg></div><div class="tbon" style="left:1289px;top:225px;width:29px;height:29px;background:linear-gradient(#9a9a9a,#c4c4c4 60%,#dadada)"></div><div class="ic" style="left:1291px;top:227px"><svg width="24" height="24" viewBox="0 0 24 24"><rect x="1.500" y="1.500" width="21" height="21" rx="1.500" fill="#fff" stroke="#a8a8a8" stroke-width="1"/><rect x="2" y="2" width="20" height="3.500" fill="#000"/><rect x="2.500" y="2.500" width="2.500" height="2.500" fill="#fff"/><rect x="5" y="8.0" width="3.500" height="2.600" fill="#000"/><rect x="10.500" y="8.0" width="9" height="2.600" fill="#ddd" stroke="#999" stroke-width=".5"/><rect x="5" y="12.4" width="3.500" height="2.600" fill="#000"/><rect x="10.500" y="12.4" width="9" height="2.600" fill="#ddd" stroke="#999" stroke-width=".5"/><rect x="5" y="16.8" width="3.500" height="2.600" fill="#000"/><rect x="10.500" y="16.8" width="9" height="2.600" fill="#ddd" stroke="#999" stroke-width=".5"/></svg></div><div class="tbon" style="left:1289px;top:262px;width:29px;height:29px;background:linear-gradient(#9a9a9a,#c4c4c4 60%,#dadada)"></div><div class="ic" style="left:1291px;top:264px"><svg width="24" height="24" viewBox="0 0 24 24"><rect x="1.500" y="1.500" width="21" height="21" rx="1.500" fill="#fff" stroke="#a8a8a8" stroke-width="1"/><rect x="2" y="2" width="20" height="3.500" fill="#000"/><rect x="2.500" y="2.500" width="2.500" height="2.500" fill="#fff"/><path d="M5 9h9M5 11.500h8M5 14h10M5 16.500h9" stroke="#c8c8c8" stroke-width=".8"/><rect x="3" y="19" width="18" height="2.500" fill="#e4e4e4" stroke="#999" stroke-width=".5"/></svg></div><div class="a" style="left:1295px;top:221px;width:17px;height:2px;border-top:1px solid #c4c0ba;border-bottom:1px solid #fbfaf9"></div><div class="a" style="left:1295px;top:258px;width:17px;height:2px;border-top:1px solid #c4c0ba;border-bottom:1px solid #fbfaf9"></div>
</div><div id="edge"></div></div>
</body></html>
